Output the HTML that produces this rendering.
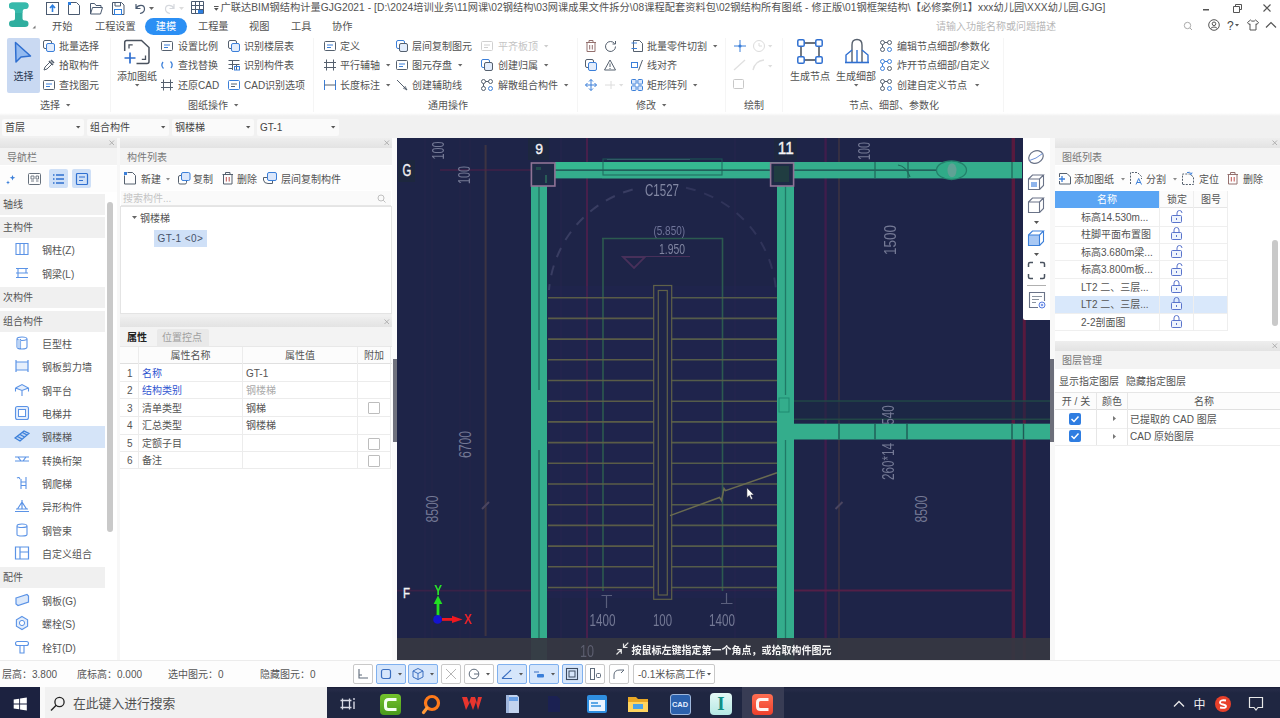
<!DOCTYPE html>
<html lang="zh-CN"><head><meta charset="utf-8"><title>广联达BIM钢结构计量GJG2021</title>
<style>
html,body{margin:0;padding:0;}
body{width:1280px;height:718px;overflow:hidden;background:#fff;position:relative;
font-family:"Liberation Sans","Noto Sans CJK SC",sans-serif;font-size:10px;color:#3a3a3a;}
#root{position:absolute;left:0;top:0;width:1280px;height:718px;overflow:hidden;background:#f0f0f0;filter:blur(0.55px);}
#root div,#root span,#root svg{position:absolute;box-sizing:border-box;}
.t{white-space:nowrap;display:block;}
.title{letter-spacing:0.068px;}
svg{overflow:visible;}
svg text{font-family:"Liberation Sans","Noto Sans CJK SC",sans-serif;}
</style></head>
<body><div id="root">
<div style="left:0px;top:0px;width:1280px;height:115px;background:#ffffff;"></div>
<div style="left:0px;top:113px;width:1280px;height:3px;background:linear-gradient(#ffffff,#f1f1f1);"></div>
<svg style="left:0px;top:0px;" width="34" height="30" viewBox="0 0 34 30"><path d="M12.5 2.5 H25 Q28.5 2.5 28.5 5.7 Q28.5 9 25 9 H24.5 Q22.5 9 22.5 11 V18.5 Q22.5 20.5 24.5 20.5 H25 Q28.5 20.5 28.5 23.8 Q28.5 27 25 27 H12.5 Q9 27 9 23.8 Q9 20.5 12.5 20.5 H13 Q15 20.5 15 18.5 V11 Q15 9 13 9 H12.5 Q9 9 9 5.7 Q9 2.5 12.5 2.5 Z" fill="#2fae9f"/>
<path d="M12.5 2.5 H25 Q28.5 2.5 28.5 5.7 Q28.5 9 25 9 H24.5 Q22.5 9 22.5 11 V13 H15 V11 Q15 9 13 9 H12.5 Q9 9 9 5.7 Q9 2.5 12.5 2.5 Z" fill="#3abdaf" opacity="0.8"/>
<path d="M32.5 28.5 h3 v-3 z" fill="#777"/></svg>
<svg style="left:46px;top:1.5px;" width="14" height="13" viewBox="0 0 14 13"><rect x="0.5" y="0.5" width="12" height="12" fill="none" stroke="#4a5a70"/><path d="M6.5 10 V3.5 M4 6 L6.5 3.2 L9 6" stroke="#2d7fe0" stroke-width="1.6" fill="none"/></svg>
<svg style="left:68px;top:1.5px;" width="14" height="13" viewBox="0 0 14 13"><path d="M0.5 3 V12.5 H11.5 V3.5 L8.5 0.5 H3" fill="none" stroke="#4a5a70"/><rect x="0" y="0" width="3" height="3" fill="#2d7fe0"/></svg>
<svg style="left:90px;top:1.5px;" width="14" height="13" viewBox="0 0 14 13"><path d="M0.5 12 V1.5 H4.5 L6 3.5 H11 V5.5 M0.5 12 L2.5 5.5 H12.5 L10.5 12 Z" fill="none" stroke="#4a5a70"/></svg>
<svg style="left:112px;top:1.5px;" width="14" height="13" viewBox="0 0 14 13"><path d="M0.5 0.5 H9.5 L12 3 V12.5 H0.5 Z" fill="none" stroke="#4a5a70"/><rect x="2.5" y="7.5" width="7" height="5" fill="none" stroke="#2d7fe0"/><path d="M3 0.5 V4 H8.5 V0.5" fill="none" stroke="#4a5a70"/></svg>
<svg style="left:134px;top:1.5px;" width="14" height="13" viewBox="0 0 14 13"><path d="M2 2 V6.5 H6.5 M2.3 6.3 C4 2.5 10.5 2 10.5 7 C10.5 9.5 8.5 11 6 11.5" fill="none" stroke="#4a5a70" stroke-width="1.2"/></svg>
<svg style="left:149px;top:7px;" width="6" height="4" viewBox="0 0 6 4"><path d="M0 0 H5 L2.5 3 Z" fill="#666"/></svg>
<svg style="left:163px;top:1.5px;" width="14" height="13" viewBox="0 0 14 13"><path d="M11 2 V6.5 H6.5 M10.7 6.3 C9 2.5 2.5 2 2.5 7 C2.5 9.5 4.5 11 7 11.5" fill="none" stroke="#d5d8dd" stroke-width="1.2"/></svg>
<svg style="left:179px;top:7px;" width="6" height="4" viewBox="0 0 6 4"><path d="M0 0 H5 L2.5 3 Z" fill="#ddd"/></svg>
<svg style="left:191px;top:1px;" width="14" height="13" viewBox="0 0 14 13"><path d="M0.5 0.5 H12.5 V12.5 H0.5 Z M0.5 4.5 H12.5 M0.5 8.5 H12.5 M4.5 0.5 V12.5 M8.5 0.5 V8.5" fill="none" stroke="#4a5a70"/><rect x="7" y="9" width="5" height="3.5" fill="#2d7fe0"/></svg>
<svg style="left:214px;top:6px;" width="6" height="6" viewBox="0 0 6 6"><path d="M0 2 H4.6 L2.3 4.8 Z M0 0 H4.6 V0.9 H0 Z" fill="#555"/></svg>
<span class="t title" style="left:220.4px;top:0.4px;height:16px;line-height:16px;font-size:10.2px;color:#525252;">广联达BIM钢结构计量GJG2021 - [D:\2024培训业务\11网课\02钢结构\03网课成果文件拆分\08课程配套资料包\02钢结构所有图纸 - 修正版\01钢框架结构\【必修案例1】xxx幼儿园\XXX幼儿园.GJG]</span>
<svg style="left:1203px;top:9px;" width="8" height="2" viewBox="0 0 8 2"><rect width="6" height="1.5" fill="#555"/></svg>
<svg style="left:1232.5px;top:3.5px;" width="10" height="9" viewBox="0 0 10 9"><path d="M2.5 2.5 V0.5 H8.5 V5.5 H6.5 M0.5 2.5 H6.5 V8.5 H0.5 Z" fill="none" stroke="#555"/></svg>
<svg style="left:1263px;top:4px;" width="9" height="9" viewBox="0 0 9 9"><path d="M0.5 0.5 L7.5 7.5 M7.5 0.5 L0.5 7.5" stroke="#555" stroke-width="1.1"/></svg>
<span class="t" style="left:52px;top:19.8px;height:14px;line-height:14px;font-size:10.2px;color:#525252;">开始</span>
<span class="t" style="left:95px;top:19.8px;height:14px;line-height:14px;font-size:10.2px;color:#525252;">工程设置</span>
<span class="t" style="left:198px;top:19.8px;height:14px;line-height:14px;font-size:10.2px;color:#525252;">工程量</span>
<span class="t" style="left:249px;top:19.8px;height:14px;line-height:14px;font-size:10.2px;color:#525252;">视图</span>
<span class="t" style="left:291px;top:19.8px;height:14px;line-height:14px;font-size:10.2px;color:#525252;">工具</span>
<span class="t" style="left:332px;top:19.8px;height:14px;line-height:14px;font-size:10.2px;color:#525252;">协作</span>
<div style="left:145px;top:18px;width:42px;height:16.5px;background:#2b8ff4;border-radius:8.5px;"></div>
<span class="t" style="left:145px;top:19.8px;height:14px;line-height:14px;font-size:10.2px;color:#ffffff;width:42px;text-align:center;">建模</span>
<span class="t" style="left:936px;top:19.8px;height:14px;line-height:14px;font-size:10px;color:#b8b8b8;">请输入功能名称或问题描述</span>
<svg style="left:1183px;top:21px;" width="10" height="10" viewBox="0 0 10 10"><circle cx="4.5" cy="4.5" r="3.2" fill="none" stroke="#aaa"/><path d="M7 7 L9 9" stroke="#aaa"/></svg>
<svg style="left:1208px;top:19px;" width="12" height="12" viewBox="0 0 12 12"><circle cx="6" cy="6" r="5.3" fill="none" stroke="#555"/><circle cx="6" cy="4.8" r="1.8" fill="none" stroke="#555"/><path d="M2.6 9.8 C3.5 7.5 8.5 7.5 9.4 9.8" fill="none" stroke="#555"/></svg>
<span class="t" style="left:1227px;top:18.8px;height:14px;line-height:14px;font-size:12px;color:#444;">?</span>
<svg style="left:1235px;top:24px;" width="5" height="3" viewBox="0 0 5 3"><path d="M0 0 H4 L2 2.4 Z" fill="#555"/></svg>
<svg style="left:1247px;top:19px;" width="12" height="12" viewBox="0 0 12 12"><path d="M3.5 1 L0.5 3.5 L2 5.5 L3 4.8 V11 H9 V4.8 L10 5.5 L11.5 3.5 L8.5 1 C8 2.6 4 2.6 3.5 1 Z" fill="none" stroke="#555"/></svg>
<svg style="left:1265px;top:20.5px;" width="12" height="8" viewBox="0 0 12 8"><path d="M1 6.5 L6 1.5 L11 6.5" fill="none" stroke="#555" stroke-width="1.2"/></svg>
<div style="left:7px;top:38px;width:33px;height:55px;background:#c9d9f2;border-radius:2px;"></div>
<svg style="left:0px;top:0px;" width="40" height="70" viewBox="0 0 40 70"><path d="M15.5 42.5 L30.5 56 L21 57 L16 62 Z" fill="#93baf0" stroke="#2f6fd0" stroke-width="1.5" stroke-linejoin="round"/></svg>
<span class="t" style="left:7px;top:69.5px;height:14px;line-height:14px;font-size:10px;color:#2a3a55;width:33px;text-align:center;">选择</span>
<svg style="left:43px;top:40px;" width="13" height="12" viewBox="0 0 13 12"><rect x="0.5" y="0.5" width="8" height="8" rx="1.5" fill="none" stroke="#55606e"/><rect x="3.5" y="3.5" width="8" height="8" rx="1.5" fill="#e3edfc" stroke="#3b7fd9"/></svg>
<span class="t" style="left:59px;top:39.8px;height:14px;line-height:14px;font-size:10px;color:#525252;">批量选择</span>
<svg style="left:43px;top:59px;" width="13" height="12" viewBox="0 0 13 12"><path d="M1 11 L2 8 L7 3 L9 5 L4 10 Z" fill="none" stroke="#55606e"/><path d="M6 2 L10 6 M8 1 L11 4" stroke="#55606e" stroke-width="1.6"/></svg>
<span class="t" style="left:59px;top:58.8px;height:14px;line-height:14px;font-size:10px;color:#525252;">拾取构件</span>
<svg style="left:43px;top:79px;" width="13" height="12" viewBox="0 0 13 12"><rect x="0.5" y="1.5" width="11" height="9" rx="1" fill="none" stroke="#55606e"/><path d="M3 5 H9 M3 7.5 H7" stroke="#3b7fd9"/></svg>
<span class="t" style="left:59px;top:78.8px;height:14px;line-height:14px;font-size:10px;color:#525252;">查找图元</span>
<span class="t" style="left:40px;top:99px;height:14px;line-height:14px;font-size:10px;color:#555;">选择</span>
<svg style="left:66px;top:104.2px;" width="5" height="3" viewBox="0 0 5 3"><path d="M0 0 H4.4 L2.2 2.6 Z" fill="#666"/></svg>
<div style="left:110px;top:38px;width:1px;height:74px;background:#f5f5f5;"></div>
<div style="left:313px;top:38px;width:1px;height:74px;background:#f5f5f5;"></div>
<div style="left:577px;top:38px;width:1px;height:74px;background:#f5f5f5;"></div>
<div style="left:725px;top:38px;width:1px;height:74px;background:#f5f5f5;"></div>
<div style="left:782px;top:38px;width:1px;height:74px;background:#f5f5f5;"></div>
<div style="left:1003px;top:38px;width:1px;height:74px;background:#f5f5f5;"></div>
<svg style="left:124px;top:39px;" width="27" height="27" viewBox="0 0 27 27"><path d="M0.7 12 V3.5 Q0.7 1.5 2.7 1.5 H17.5 L25 8.5 V22.5 Q25 24.5 23 24.5 H12.5" fill="none" stroke="#4a525e" stroke-width="1.5"/><path d="M5 9.5 V5.8 H8.7 M21.5 16.5 V20.3 H17.8" fill="none" stroke="#4a525e" stroke-width="1.3"/><path d="M0.5 19 H11.5 M6 13.5 V24.5" stroke="#2f6fd0" stroke-width="1.7"/></svg>
<span class="t" style="left:117px;top:69.5px;height:14px;line-height:14px;font-size:10px;color:#525252;">添加图纸</span>
<svg style="left:135px;top:84px;" width="5" height="3" viewBox="0 0 5 3"><path d="M0 0 H4.4 L2.2 2.6 Z" fill="#666"/></svg>
<svg style="left:161px;top:40px;" width="13" height="12" viewBox="0 0 13 12"><rect x="0.5" y="1.5" width="11" height="9" rx="1" fill="none" stroke="#55606e"/><path d="M3 5 H9 M3 7.5 H7" stroke="#3b7fd9"/></svg>
<span class="t" style="left:178px;top:39.8px;height:14px;line-height:14px;font-size:10px;color:#525252;">设置比例</span>
<svg style="left:161px;top:59px;" width="13" height="12" viewBox="0 0 13 12"><path d="M2 3 A5 5 0 0 0 2.5 9.5 M10 9 A5 5 0 0 0 9.5 2.5" fill="none" stroke="#3b7fd9" stroke-width="1.3"/></svg>
<span class="t" style="left:178px;top:58.8px;height:14px;line-height:14px;font-size:10px;color:#525252;">查找替换</span>
<svg style="left:161px;top:79px;" width="13" height="12" viewBox="0 0 13 12"><path d="M2.5 0.5 V11.5 M9.5 0.5 V11.5 M0 3.5 H12 M0 8.5 H12" stroke="#55606e" fill="none"/></svg>
<span class="t" style="left:178px;top:78.8px;height:14px;line-height:14px;font-size:10px;color:#525252;">还原CAD</span>
<svg style="left:228px;top:40px;" width="13" height="12" viewBox="0 0 13 12"><rect x="0.5" y="0.5" width="8" height="8" rx="1.5" fill="none" stroke="#55606e"/><rect x="3.5" y="3.5" width="8" height="8" rx="1.5" fill="#e3edfc" stroke="#3b7fd9"/></svg>
<span class="t" style="left:244px;top:39.8px;height:14px;line-height:14px;font-size:10px;color:#525252;">识别楼层表</span>
<svg style="left:228px;top:59px;" width="13" height="12" viewBox="0 0 13 12"><path d="M0.5 1.5 H11.5 M0.5 5.5 H11.5 M4.5 1 V11 M8.5 5 V11 M0.5 9.5 H4.5" fill="none" stroke="#55606e"/><rect x="6.5" y="7.5" width="5" height="3.5" fill="none" stroke="#3b7fd9"/></svg>
<span class="t" style="left:244px;top:58.8px;height:14px;line-height:14px;font-size:10px;color:#525252;">识别构件表</span>
<svg style="left:228px;top:79px;" width="13" height="12" viewBox="0 0 13 12"><rect x="0.5" y="1.5" width="11" height="9" rx="1" fill="none" stroke="#3b7fd9"/><path d="M3 5 H9 M3 7.5 H7" stroke="#55606e"/></svg>
<span class="t" style="left:244px;top:78.8px;height:14px;line-height:14px;font-size:10px;color:#525252;">CAD识别选项</span>
<span class="t" style="left:188px;top:99px;height:14px;line-height:14px;font-size:10px;color:#555;">图纸操作</span>
<svg style="left:234px;top:104.2px;" width="5" height="3" viewBox="0 0 5 3"><path d="M0 0 H4.4 L2.2 2.6 Z" fill="#666"/></svg>
<svg style="left:324px;top:40px;" width="13" height="12" viewBox="0 0 13 12"><rect x="0.5" y="1.5" width="11" height="9" rx="1" fill="none" stroke="#55606e"/><path d="M3 5 H9 M3 7.5 H7" stroke="#3b7fd9"/></svg>
<span class="t" style="left:340px;top:39.8px;height:14px;line-height:14px;font-size:10px;color:#525252;">定义</span>
<svg style="left:324px;top:59px;" width="13" height="12" viewBox="0 0 13 12"><path d="M2.5 0.5 V11.5 M9.5 0.5 V11.5 M0 3.5 H12 M0 8.5 H12" stroke="#55606e" fill="none"/></svg>
<span class="t" style="left:340px;top:58.8px;height:14px;line-height:14px;font-size:10px;color:#525252;">平行辅轴</span>
<svg style="left:386px;top:64px;" width="5" height="3" viewBox="0 0 5 3"><path d="M0 0 H4.4 L2.2 2.6 Z" fill="#666"/></svg>
<svg style="left:324px;top:79px;" width="13" height="12" viewBox="0 0 13 12"><path d="M0.5 1 V11 M11.5 1 V11" stroke="#3b7fd9"/><path d="M0.5 6 H11.5" stroke="#55606e"/></svg>
<span class="t" style="left:340px;top:78.8px;height:14px;line-height:14px;font-size:10px;color:#525252;">长度标注</span>
<svg style="left:386px;top:84px;" width="5" height="3" viewBox="0 0 5 3"><path d="M0 0 H4.4 L2.2 2.6 Z" fill="#666"/></svg>
<svg style="left:396px;top:40px;" width="13" height="12" viewBox="0 0 13 12"><rect x="0.5" y="0.5" width="8" height="8" rx="1.5" fill="none" stroke="#3b7fd9"/><rect x="3.5" y="3.5" width="8" height="8" rx="1.5" fill="#e3edfc" stroke="#55606e"/></svg>
<span class="t" style="left:412px;top:39.8px;height:14px;line-height:14px;font-size:10px;color:#525252;">层间复制图元</span>
<svg style="left:396px;top:59px;" width="13" height="12" viewBox="0 0 13 12"><rect x="0.5" y="1.5" width="11" height="9" rx="1" fill="none" stroke="#55606e"/><path d="M3 5 H9 M3 7.5 H7" stroke="#3b7fd9"/></svg>
<span class="t" style="left:412px;top:58.8px;height:14px;line-height:14px;font-size:10px;color:#525252;">图元存盘</span>
<svg style="left:458px;top:64px;" width="5" height="3" viewBox="0 0 5 3"><path d="M0 0 H4.4 L2.2 2.6 Z" fill="#666"/></svg>
<svg style="left:396px;top:79px;" width="13" height="12" viewBox="0 0 13 12"><path d="M1 1 L11 11" stroke="#55606e"/><path d="M7 9 L11 11 L9 7" stroke="#55606e" fill="none" stroke-width="0.8"/></svg>
<span class="t" style="left:412px;top:78.8px;height:14px;line-height:14px;font-size:10px;color:#525252;">创建辅助线</span>
<svg style="left:481px;top:40px;" width="13" height="12" viewBox="0 0 13 12"><rect x="0.5" y="1.5" width="11" height="9" rx="1" fill="none" stroke="#d0d0d0"/><path d="M3 5 H9 M3 7.5 H7" stroke="#d0d0d0"/></svg>
<span class="t" style="left:498px;top:39.8px;height:14px;line-height:14px;font-size:10px;color:#c4c4c4;">平齐板顶</span>
<svg style="left:544px;top:45px;" width="5" height="3" viewBox="0 0 5 3"><path d="M0 0 H4.4 L2.2 2.6 Z" fill="#ccc"/></svg>
<svg style="left:481px;top:59px;" width="13" height="12" viewBox="0 0 13 12"><rect x="0.5" y="0.5" width="8" height="8" rx="1.5" fill="none" stroke="#3b7fd9"/><rect x="3.5" y="3.5" width="8" height="8" rx="1.5" fill="#e3edfc" stroke="#55606e"/></svg>
<span class="t" style="left:498px;top:58.8px;height:14px;line-height:14px;font-size:10px;color:#525252;">创建归属</span>
<svg style="left:544px;top:64px;" width="5" height="3" viewBox="0 0 5 3"><path d="M0 0 H4.4 L2.2 2.6 Z" fill="#666"/></svg>
<svg style="left:481px;top:79px;" width="13" height="12" viewBox="0 0 13 12"><circle cx="2.5" cy="2.5" r="2" fill="none" stroke="#55606e"/><circle cx="9.5" cy="2.5" r="2" fill="none" stroke="#55606e"/><circle cx="2.5" cy="9.5" r="2" fill="none" stroke="#55606e"/><circle cx="9.5" cy="9.5" r="2" fill="none" stroke="#3b7fd9"/><path d="M4.5 2.5 H7.5 M2.5 4.5 V7.5" stroke="#55606e"/></svg>
<span class="t" style="left:498px;top:78.8px;height:14px;line-height:14px;font-size:10px;color:#525252;">解散组合构件</span>
<svg style="left:564px;top:84px;" width="5" height="3" viewBox="0 0 5 3"><path d="M0 0 H4.4 L2.2 2.6 Z" fill="#666"/></svg>
<span class="t" style="left:428px;top:99px;height:14px;line-height:14px;font-size:10px;color:#555;">通用操作</span>
<svg style="left:585px;top:40px;" width="13" height="12" viewBox="0 0 13 12"><path d="M1 2.5 H11 M4 2.5 V0.5 H8 V2.5 M2 2.5 V11.5 H10 V2.5 M4.7 5 V9.5 M7.3 5 V9.5" fill="none" stroke="#94706e"/></svg>
<svg style="left:604px;top:40px;" width="13" height="12" viewBox="0 0 13 12"><path d="M10.5 3.5 A5 5 0 1 0 11.5 6.5" fill="none" stroke="#55606e"/><path d="M11.5 1 V4 H8.5" fill="none" stroke="#55606e"/></svg>
<svg style="left:585px;top:59px;" width="13" height="12" viewBox="0 0 13 12"><rect x="0.5" y="0.5" width="8" height="8" rx="1.5" fill="none" stroke="#55606e"/><rect x="3.5" y="3.5" width="8" height="8" rx="1.5" fill="#e3edfc" stroke="#3b7fd9"/></svg>
<svg style="left:604px;top:59px;" width="13" height="12" viewBox="0 0 13 12"><path d="M6 1 L11.5 11 H0.5 Z" fill="none" stroke="#55606e"/><path d="M6 4.5 V8 M6 9 V10" stroke="#55606e"/></svg>
<svg style="left:585px;top:79px;" width="13" height="12" viewBox="0 0 13 12"><path d="M6 0.5 V11.5 M0.5 6 H11.5 M4 2.5 L6 0.5 L8 2.5 M4 9.5 L6 11.5 L8 9.5 M2.5 4 L0.5 6 L2.5 8 M9.5 4 L11.5 6 L9.5 8" fill="none" stroke="#3b7fd9"/></svg>
<svg style="left:604px;top:79px;" width="13" height="12" viewBox="0 0 13 12"><path d="M1 6 H11 M7 2 V10" stroke="#dcdcdc"/></svg>
<svg style="left:619px;top:84px;" width="5" height="3" viewBox="0 0 5 3"><path d="M0 0 H4.4 L2.2 2.6 Z" fill="#ddd"/></svg>
<svg style="left:631px;top:40px;" width="13" height="12" viewBox="0 0 13 12"><path d="M2.5 0.5 H8.5 L11.5 3.5 V11.5 H2.5 Z" fill="none" stroke="#55606e"/><path d="M0.5 3 H6 M0.5 8.5 H6" stroke="#3b7fd9"/></svg>
<span class="t" style="left:647px;top:39.8px;height:14px;line-height:14px;font-size:10px;color:#525252;">批量零件切割</span>
<svg style="left:713px;top:45px;" width="5" height="3" viewBox="0 0 5 3"><path d="M0 0 H4.4 L2.2 2.6 Z" fill="#666"/></svg>
<svg style="left:631px;top:59px;" width="13" height="12" viewBox="0 0 13 12"><rect x="0.5" y="3.5" width="6" height="5" fill="none" stroke="#3b7fd9"/><path d="M7.5 11.5 L11.5 1" stroke="#55606e"/></svg>
<span class="t" style="left:647px;top:58.8px;height:14px;line-height:14px;font-size:10px;color:#525252;">线对齐</span>
<svg style="left:631px;top:79px;" width="13" height="12" viewBox="0 0 13 12"><rect x="0.5" y="0.5" width="4.6" height="4.6" rx="0.8" fill="#dbe7fb" stroke="#3b7fd9"/><rect x="6.9" y="0.5" width="4.6" height="4.6" rx="0.8" fill="#dbe7fb" stroke="#3b7fd9"/><rect x="0.5" y="6.9" width="4.6" height="4.6" rx="0.8" fill="#dbe7fb" stroke="#3b7fd9"/><rect x="6.9" y="6.9" width="4.6" height="4.6" rx="0.8" fill="#dbe7fb" stroke="#3b7fd9"/></svg>
<span class="t" style="left:647px;top:78.8px;height:14px;line-height:14px;font-size:10px;color:#525252;">矩形阵列</span>
<svg style="left:693px;top:84px;" width="5" height="3" viewBox="0 0 5 3"><path d="M0 0 H4.4 L2.2 2.6 Z" fill="#666"/></svg>
<span class="t" style="left:636px;top:99px;height:14px;line-height:14px;font-size:10px;color:#555;">修改</span>
<svg style="left:662px;top:104.2px;" width="5" height="3" viewBox="0 0 5 3"><path d="M0 0 H4.4 L2.2 2.6 Z" fill="#666"/></svg>
<svg style="left:733px;top:39px;" width="14" height="14" viewBox="0 0 14 14"><path d="M7 1 V13 M1 7 H13" stroke="#3b7fd9"/><circle cx="7" cy="7" r="1.6" fill="#3b7fd9"/></svg>
<svg style="left:752px;top:39px;" width="14" height="14" viewBox="0 0 14 14"><circle cx="7" cy="7" r="5.5" fill="none" stroke="#dcdcdc"/><path d="M7 4 V7 H10" stroke="#dcdcdc" fill="none"/></svg>
<svg style="left:768px;top:45px;" width="5" height="3" viewBox="0 0 5 3"><path d="M0 0 H4.4 L2.2 2.6 Z" fill="#ddd"/></svg>
<svg style="left:733px;top:58px;" width="14" height="14" viewBox="0 0 14 14"><path d="M1 12 L12 2" stroke="#e0e0e0" stroke-width="1.3"/></svg>
<svg style="left:752px;top:58px;" width="14" height="14" viewBox="0 0 14 14"><path d="M1 12 Q3 3 12 2" stroke="#e0e0e0" stroke-width="1.3" fill="none"/></svg>
<svg style="left:768px;top:65px;" width="5" height="3" viewBox="0 0 5 3"><path d="M0 0 H4.4 L2.2 2.6 Z" fill="#ddd"/></svg>
<svg style="left:733px;top:79px;" width="12" height="11" viewBox="0 0 12 11"><rect x="0.5" y="0.5" width="10" height="9" rx="1" fill="none" stroke="#c8c8c8"/></svg>
<span class="t" style="left:744px;top:99px;height:14px;line-height:14px;font-size:10px;color:#555;">绘制</span>
<svg style="left:796px;top:38px;" width="28" height="27" viewBox="0 0 28 27"><path d="M5 5 H23 V22 H5 Z" fill="none" stroke="#3a4350" stroke-width="1.4"/><rect x="1.7999999999999998" y="1.7999999999999998" width="6.4" height="6.4" rx="1.3" fill="#fff" stroke="#2f6fd0" stroke-width="1.5"/><rect x="19.8" y="1.7999999999999998" width="6.4" height="6.4" rx="1.3" fill="#fff" stroke="#2f6fd0" stroke-width="1.5"/><rect x="1.7999999999999998" y="18.8" width="6.4" height="6.4" rx="1.3" fill="#fff" stroke="#2f6fd0" stroke-width="1.5"/><rect x="19.8" y="18.8" width="6.4" height="6.4" rx="1.3" fill="#fff" stroke="#2f6fd0" stroke-width="1.5"/></svg>
<span class="t" style="left:790px;top:69.5px;height:14px;line-height:14px;font-size:10px;color:#525252;">生成节点</span>
<svg style="left:844px;top:38px;" width="26" height="27" viewBox="0 0 26 27"><path d="M8 24 V7 Q8 1.5 13 1.5 Q18 1.5 18 7 V24" fill="none" stroke="#555f6c" stroke-width="1.4"/><path d="M2 24 V17 L8 12 M24 24 V17 L18 12 M13 12 V24" fill="none" stroke="#2f6fd0" stroke-width="1.4"/><path d="M1 24.5 H25" stroke="#2f6fd0" stroke-width="1.6"/></svg>
<span class="t" style="left:836px;top:69.5px;height:14px;line-height:14px;font-size:10px;color:#525252;">生成细部</span>
<svg style="left:854px;top:84px;" width="5" height="3" viewBox="0 0 5 3"><path d="M0 0 H4.4 L2.2 2.6 Z" fill="#666"/></svg>
<svg style="left:880px;top:40px;" width="13" height="12" viewBox="0 0 13 12"><circle cx="2.5" cy="2.5" r="2" fill="none" stroke="#55606e"/><circle cx="9.5" cy="2.5" r="2" fill="none" stroke="#55606e"/><circle cx="2.5" cy="9.5" r="2" fill="none" stroke="#55606e"/><circle cx="9.5" cy="9.5" r="2" fill="none" stroke="#3b7fd9"/><path d="M4.5 2.5 H7.5 M2.5 4.5 V7.5" stroke="#55606e"/></svg>
<span class="t" style="left:897px;top:39.8px;height:14px;line-height:14px;font-size:10px;color:#525252;">编辑节点细部/参数化</span>
<svg style="left:880px;top:59px;" width="13" height="12" viewBox="0 0 13 12"><circle cx="2.5" cy="2.5" r="2" fill="none" stroke="#3b7fd9"/><circle cx="9.5" cy="2.5" r="2" fill="none" stroke="#3b7fd9"/><circle cx="2.5" cy="9.5" r="2" fill="none" stroke="#3b7fd9"/><circle cx="9.5" cy="9.5" r="2" fill="none" stroke="#55606e"/><path d="M4.5 2.5 H7.5 M2.5 4.5 V7.5" stroke="#3b7fd9"/></svg>
<span class="t" style="left:897px;top:58.8px;height:14px;line-height:14px;font-size:10px;color:#525252;">炸开节点细部/自定义</span>
<svg style="left:880px;top:79px;" width="13" height="12" viewBox="0 0 13 12"><circle cx="2.5" cy="2.5" r="2" fill="none" stroke="#55606e"/><circle cx="9.5" cy="2.5" r="2" fill="none" stroke="#55606e"/><circle cx="2.5" cy="9.5" r="2" fill="none" stroke="#55606e"/><circle cx="9.5" cy="9.5" r="2" fill="none" stroke="#3b7fd9"/><path d="M4.5 2.5 H7.5 M2.5 4.5 V7.5" stroke="#55606e"/></svg>
<span class="t" style="left:897px;top:78.8px;height:14px;line-height:14px;font-size:10px;color:#525252;">创建自定义节点</span>
<svg style="left:975px;top:84px;" width="5" height="3" viewBox="0 0 5 3"><path d="M0 0 H4.4 L2.2 2.6 Z" fill="#666"/></svg>
<span class="t" style="left:849px;top:99px;height:14px;line-height:14px;font-size:10px;color:#555;">节点、细部、参数化</span>
<div style="left:0px;top:116px;width:1280px;height:22px;background:#f1f1f1;"></div>
<div style="left:2px;top:119px;width:82px;height:17px;background:#fafafa;border-radius:2px;"></div>
<span class="t" style="left:5px;top:121.3px;height:14px;line-height:14px;font-size:10px;color:#444;">首层</span>
<svg style="left:76px;top:126px;" width="5" height="3" viewBox="0 0 5 3"><path d="M0 0 H4.4 L2.2 2.6 Z" fill="#555"/></svg>
<div style="left:87px;top:119px;width:82px;height:17px;background:#fafafa;border-radius:2px;"></div>
<span class="t" style="left:90px;top:121.3px;height:14px;line-height:14px;font-size:10px;color:#444;">组合构件</span>
<svg style="left:161px;top:126px;" width="5" height="3" viewBox="0 0 5 3"><path d="M0 0 H4.4 L2.2 2.6 Z" fill="#555"/></svg>
<div style="left:172px;top:119px;width:82px;height:17px;background:#fafafa;border-radius:2px;"></div>
<span class="t" style="left:175px;top:121.3px;height:14px;line-height:14px;font-size:10px;color:#444;">钢楼梯</span>
<svg style="left:246px;top:126px;" width="5" height="3" viewBox="0 0 5 3"><path d="M0 0 H4.4 L2.2 2.6 Z" fill="#555"/></svg>
<div style="left:257px;top:119px;width:82px;height:17px;background:#fafafa;border-radius:2px;"></div>
<span class="t" style="left:260px;top:121.3px;height:14px;line-height:14px;font-size:10px;color:#444;">GT-1</span>
<svg style="left:331px;top:126px;" width="5" height="3" viewBox="0 0 5 3"><path d="M0 0 H4.4 L2.2 2.6 Z" fill="#555"/></svg>
<div style="left:0px;top:138px;width:117px;height:522px;background:#ffffff;"></div>
<div style="left:0px;top:138px;width:117px;height:10px;background:linear-gradient(#eeeeee,#e3e3e3);"></div>
<svg style="left:109px;top:140px;" width="6" height="6" viewBox="0 0 6 6"><path d="M0.5 0.5 L5 5 M5 0.5 L0.5 5" stroke="#aaa" stroke-width="0.9"/></svg>
<div style="left:0px;top:148px;width:117px;height:17px;background:#f3f3f3;"></div>
<span class="t" style="left:7px;top:150.8px;height:14px;line-height:14px;font-size:10px;color:#777;">导航栏</span>
<div style="left:0px;top:166px;width:117px;height:26px;background:#fdfdfd;"></div>
<svg style="left:5px;top:174px;" width="12" height="12" viewBox="0 0 12 12"><path d="M7.5 1 L8.3 3 L10.3 3.8 L8.3 4.6 L7.5 6.6 L6.7 4.6 L4.7 3.8 L6.7 3 Z M3 6.5 L3.6 8 L5 8.5 L3.6 9 L3 10.5 L2.4 9 L1 8.5 L2.4 8 Z" fill="#3b7fd9"/></svg>
<svg style="left:27px;top:171px;" width="16" height="16" viewBox="0 0 16 16"><rect x="1.5" y="2.5" width="12" height="11" rx="1" fill="none" stroke="#66707c"/><path d="M4 5 H7 V8 H4 Z M9 5 H11.5 V8 H9 Z M4 10 H7 M9 10 H11.5" fill="none" stroke="#66707c" stroke-width="0.9"/></svg>
<div style="left:49px;top:169px;width:19px;height:19px;background:#cfe0f7;border-radius:2px;"></div>
<svg style="left:51px;top:171px;" width="16" height="16" viewBox="0 0 16 16"><path d="M5 4 H13 M5 8 H13 M5 12 H13" stroke="#2f6fd0" stroke-width="1.4"/><path d="M2 4 H3.5 M2 8 H3.5 M2 12 H3.5" stroke="#2f6fd0" stroke-width="1.6"/></svg>
<div style="left:72px;top:169px;width:19px;height:19px;background:#cfe0f7;border-radius:2px;"></div>
<svg style="left:74px;top:171px;" width="16" height="16" viewBox="0 0 16 16"><rect x="2.5" y="2.5" width="11" height="11" rx="1" fill="none" stroke="#2f6fd0" stroke-width="1.2"/><path d="M5 6 H11 M5 9.5 H9" stroke="#2f6fd0"/></svg>
<div style="left:0px;top:194px;width:105px;height:21px;background:#f0f0f0;"></div>
<span class="t" style="left:3px;top:198.3px;height:14px;line-height:14px;font-size:10px;color:#545454;">轴线</span>
<div style="left:0px;top:217px;width:105px;height:21px;background:#f0f0f0;"></div>
<span class="t" style="left:3px;top:221.3px;height:14px;line-height:14px;font-size:10px;color:#545454;">主构件</span>
<svg style="left:14px;top:241.4px;" width="16" height="16" viewBox="0 0 16 16"><path d="M2 2.5 H14 V13.5 H2 Z M6 2.5 V13.5 M10 2.5 V13.5" fill="none" stroke="#5b93e6" stroke-width="1.1"/></svg>
<span class="t" style="left:42px;top:244.3px;height:14px;line-height:14px;font-size:10px;color:#545454;">钢柱(Z)</span>
<svg style="left:14px;top:265.4px;" width="16" height="16" viewBox="0 0 16 16"><path d="M2 3.5 H14 M2 12.5 H14 M2 8 H14 M4 3.5 V12.5 M12 3.5 V8" fill="none" stroke="#5b93e6" stroke-width="1.1"/></svg>
<span class="t" style="left:42px;top:268.3px;height:14px;line-height:14px;font-size:10px;color:#545454;">钢梁(L)</span>
<div style="left:0px;top:287px;width:105px;height:21px;background:#f0f0f0;"></div>
<span class="t" style="left:3px;top:291.3px;height:14px;line-height:14px;font-size:10px;color:#545454;">次构件</span>
<div style="left:0px;top:311px;width:105px;height:21px;background:#f0f0f0;"></div>
<span class="t" style="left:3px;top:315.3px;height:14px;line-height:14px;font-size:10px;color:#545454;">组合构件</span>
<svg style="left:14px;top:335.4px;" width="16" height="16" viewBox="0 0 16 16"><path d="M3 4 V12 Q3 14 8 14 Q13 14 13 12 V4 Q13 2 8 2 Q3 2 3 4 Z M6.5 4 V13.5 M3 4.5 Q8 6.5 13 4.5" fill="none" stroke="#5b93e6" stroke-width="1.1"/><rect x="3.5" y="5" width="3" height="8" fill="#bcd4f5"/></svg>
<span class="t" style="left:42px;top:338.3px;height:14px;line-height:14px;font-size:10px;color:#545454;">巨型柱</span>
<svg style="left:14px;top:358.4px;" width="16" height="16" viewBox="0 0 16 16"><rect x="2" y="4" width="12" height="8" fill="#e6effc"/><path d="M2 2 V14 M14 2 V14 M2 4 H14 M2 12 H14" fill="none" stroke="#5b93e6" stroke-width="1.2"/></svg>
<span class="t" style="left:42px;top:361.3px;height:14px;line-height:14px;font-size:10px;color:#545454;">钢板剪力墙</span>
<svg style="left:14px;top:382.4px;" width="16" height="16" viewBox="0 0 16 16"><path d="M1.5 6 L8 2.5 L14.5 6 L8 8.5 Z" fill="#e6effc"/><path d="M1.5 6 L8 2.5 L14.5 6 V9.5 M1.5 6 V9.5 M8 8.5 V14 M1.5 6 L8 8.5 L14.5 6" fill="none" stroke="#5b93e6" stroke-width="1.1"/></svg>
<span class="t" style="left:42px;top:385.3px;height:14px;line-height:14px;font-size:10px;color:#545454;">钢平台</span>
<svg style="left:14px;top:405.4px;" width="16" height="16" viewBox="0 0 16 16"><rect x="1.5" y="1.5" width="13" height="13" rx="2" fill="#e3edfc" stroke="#5b93e6" stroke-width="1.1"/><rect x="4.5" y="4.5" width="7" height="7" fill="#fff" stroke="#5b93e6"/></svg>
<span class="t" style="left:42px;top:408.3px;height:14px;line-height:14px;font-size:10px;color:#545454;">电梯井</span>
<div style="left:0px;top:426px;width:105px;height:22px;background:#d5e4f8;"></div>
<svg style="left:14px;top:428.4px;" width="16" height="16" viewBox="0 0 16 16"><path d="M1 10 L10 3 L15 5.5 L6 13 Z M3.5 8.5 L8 11 M6 6.5 L10.5 9 M8.5 4.5 L13 7" fill="#bcd4f5" stroke="#3b7fd9" stroke-width="1.2"/></svg>
<span class="t" style="left:42px;top:431.3px;height:14px;line-height:14px;font-size:10px;color:#545454;">钢楼梯</span>
<svg style="left:14px;top:452.4px;" width="16" height="16" viewBox="0 0 16 16"><path d="M1 5 H15 M1 9 H15 M4 5 L7 9 M12 5 L9 9" fill="none" stroke="#5b93e6" stroke-width="1.2"/></svg>
<span class="t" style="left:42px;top:455.3px;height:14px;line-height:14px;font-size:10px;color:#545454;">转换桁架</span>
<svg style="left:14px;top:475.4px;" width="16" height="16" viewBox="0 0 16 16"><path d="M7 4 V14 M12 2 V14 M7 7 H12 M7 10.5 H12 M3 3 Q5 1.5 6 4" fill="none" stroke="#5b93e6" stroke-width="1.1"/></svg>
<span class="t" style="left:42px;top:478.3px;height:14px;line-height:14px;font-size:10px;color:#545454;">钢爬梯</span>
<svg style="left:14px;top:498.4px;" width="16" height="16" viewBox="0 0 16 16"><path d="M1 13.5 H15 M2 11 H14 M8 2 V11 M8 4 L3.5 11 M8 4 L12.5 11" fill="none" stroke="#5b93e6" stroke-width="1.2"/></svg>
<span class="t" style="left:42px;top:501.3px;height:14px;line-height:14px;font-size:10px;color:#545454;">异形构件</span>
<svg style="left:14px;top:522.4px;" width="16" height="16" viewBox="0 0 16 16"><path d="M3 4 V12.5 Q3 14 8 14 Q13 14 13 12.5 V4 Q13 2 8 2 Q3 2 3 4 Q3 5.5 8 5.5 Q13 5.5 13 4" fill="none" stroke="#5b93e6" stroke-width="1.1"/></svg>
<span class="t" style="left:42px;top:525.3px;height:14px;line-height:14px;font-size:10px;color:#545454;">钢管束</span>
<svg style="left:14px;top:545.4px;" width="16" height="16" viewBox="0 0 16 16"><path d="M1.5 2 H14.5 V14 H1.5 Z M6 2 V14 M6 7 H14.5" fill="none" stroke="#5b93e6" stroke-width="1.2"/></svg>
<span class="t" style="left:42px;top:548.3px;height:14px;line-height:14px;font-size:10px;color:#545454;">自定义组合</span>
<div style="left:0px;top:567px;width:105px;height:21px;background:#f0f0f0;"></div>
<span class="t" style="left:3px;top:571.3px;height:14px;line-height:14px;font-size:10px;color:#545454;">配件</span>
<svg style="left:14px;top:592.4px;" width="16" height="16" viewBox="0 0 16 16"><path d="M2 6 L13 2.5 L14.5 4 V10 L4 13.5 L2 12 Z" fill="#dbe8fa" stroke="#5b93e6" stroke-width="1.2"/></svg>
<span class="t" style="left:42px;top:595.3px;height:14px;line-height:14px;font-size:10px;color:#545454;">钢板(G)</span>
<svg style="left:14px;top:615.4px;" width="16" height="16" viewBox="0 0 16 16"><path d="M8 1.5 L13.6 4.7 V11.3 L8 14.5 L2.4 11.3 V4.7 Z" fill="#e3edfb" stroke="#5b93e6" stroke-width="1.1"/><circle cx="8" cy="8" r="2.6" fill="#fff" stroke="#5b93e6"/></svg>
<span class="t" style="left:42px;top:618.3px;height:14px;line-height:14px;font-size:10px;color:#545454;">螺栓(S)</span>
<svg style="left:14px;top:639.4px;" width="16" height="16" viewBox="0 0 16 16"><rect x="1.5" y="2.5" width="13" height="4" rx="2" fill="none" stroke="#5b93e6" stroke-width="1.1"/><path d="M6 6.5 V14 H10 V6.5" fill="none" stroke="#5b93e6" stroke-width="1.1"/></svg>
<span class="t" style="left:42px;top:642.3px;height:14px;line-height:14px;font-size:10px;color:#545454;">栓钉(D)</span>
<div style="left:107px;top:202px;width:6px;height:330px;background:#c9c9c9;border-radius:3px;"></div>
<div style="left:117px;top:138px;width:3px;height:522px;background:#f7f7f7;"></div>
<div style="left:120px;top:138px;width:272px;height:178px;background:#ffffff;"></div>
<div style="left:120px;top:138px;width:272px;height:10px;background:linear-gradient(#eeeeee,#e3e3e3);"></div>
<svg style="left:384px;top:140px;" width="6" height="6" viewBox="0 0 6 6"><path d="M0.5 0.5 L5 5 M5 0.5 L0.5 5" stroke="#aaa" stroke-width="0.9"/></svg>
<div style="left:120px;top:148px;width:272px;height:17px;background:#f3f3f3;"></div>
<span class="t" style="left:127px;top:150.8px;height:14px;line-height:14px;font-size:10px;color:#777;">构件列表</span>
<div style="left:120px;top:166px;width:272px;height:24px;background:#fdfdfd;"></div>
<svg style="left:124px;top:172px;" width="13" height="13" viewBox="0 0 13 13"><path d="M0.5 3.5 V12 H11.5 V3.5 L8.5 0.5 H3.5" fill="none" stroke="#55606e"/><rect x="0" y="0" width="3" height="3" fill="#3b7fd9"/></svg>
<span class="t" style="left:141px;top:172.8px;height:14px;line-height:14px;font-size:10px;color:#525252;">新建</span>
<svg style="left:166px;top:178px;" width="5" height="3" viewBox="0 0 5 3"><path d="M0 0 H4 L2 2.4 Z" fill="#888"/></svg>
<svg style="left:178px;top:172px;" width="13" height="13" viewBox="0 0 13 13"><rect x="0.5" y="3.5" width="8" height="8.5" rx="1.5" fill="#fff" stroke="#55606e"/><rect x="3.5" y="0.5" width="8.5" height="8" rx="1.5" fill="#dbe7fb" stroke="#3b7fd9"/></svg>
<span class="t" style="left:193px;top:172.8px;height:14px;line-height:14px;font-size:10px;color:#525252;">复制</span>
<svg style="left:222px;top:172px;" width="12" height="13" viewBox="0 0 12 13"><path d="M0.5 2.5 H11 M3.5 2.5 V0.5 H8 V2.5 M1.5 2.5 V12 H10 V2.5" fill="none" stroke="#55606e"/><path d="M4.3 5 V9.5 M7.2 5 V9.5" stroke="#c0504d"/></svg>
<span class="t" style="left:237px;top:172.8px;height:14px;line-height:14px;font-size:10px;color:#525252;">删除</span>
<svg style="left:263px;top:172px;" width="14" height="13" viewBox="0 0 14 13"><path d="M0.5 8 V5.5 H4 M0.5 8 Q1 11.5 5 11.5 H9.5 V8.5" fill="none" stroke="#55606e"/><rect x="4.5" y="0.5" width="9" height="8" rx="1.5" fill="#dbe7fb" stroke="#3b7fd9"/></svg>
<span class="t" style="left:281px;top:172.8px;height:14px;line-height:14px;font-size:10px;color:#525252;">层间复制构件</span>
<div style="left:121px;top:191px;width:270px;height:15px;background:#fafafa;border-bottom:1px solid #e6e6e6;"></div>
<span class="t" style="left:123px;top:191.8px;height:14px;line-height:14px;font-size:10px;color:#c4c4c4;">搜索构件...</span>
<svg style="left:377px;top:194px;" width="9" height="9" viewBox="0 0 9 9"><circle cx="4" cy="4" r="3" fill="none" stroke="#c0c0c0"/><path d="M6.2 6.2 L8.5 8.5" stroke="#c0c0c0"/></svg>
<div style="left:120px;top:206px;width:272px;height:108px;background:#ffffff;border:1px solid #e4e4e4;"></div>
<svg style="left:132px;top:216px;" width="5" height="4" viewBox="0 0 5 4"><path d="M0 0 H5 L2.5 3 Z" fill="#666"/></svg>
<span class="t" style="left:140px;top:211.8px;height:14px;line-height:14px;font-size:10px;color:#545454;">钢楼梯</span>
<div style="left:154px;top:230px;width:53px;height:17px;background:#cfe0f7;"></div>
<span class="t" style="left:157.5px;top:232.3px;height:14px;line-height:14px;font-size:10px;color:#46526a;letter-spacing:0.45px;">GT-1 &lt;0&gt;</span>
<div style="left:120px;top:314px;width:272px;height:3px;background:#f0f0f0;"></div>
<div style="left:120px;top:317px;width:272px;height:343px;background:#ffffff;"></div>
<div style="left:120px;top:317px;width:272px;height:10px;background:linear-gradient(#eeeeee,#e3e3e3);"></div>
<svg style="left:384px;top:319px;" width="6" height="6" viewBox="0 0 6 6"><path d="M0.5 0.5 L5 5 M5 0.5 L0.5 5" stroke="#aaa" stroke-width="0.9"/></svg>
<div style="left:120px;top:327px;width:272px;height:20px;background:#f3f3f3;"></div>
<div style="left:157px;top:329px;width:52px;height:17px;background:#e9e9e9;border-radius:2px 2px 0 0;"></div>
<span class="t" style="left:127px;top:330.8px;height:14px;line-height:14px;font-size:10px;color:#222;font-weight:bold;">属性</span>
<span class="t" style="left:162px;top:330.8px;height:14px;line-height:14px;font-size:10px;color:#a0a0a0;">位置控点</span>
<div style="left:120px;top:346px;width:272px;height:18px;background:#fcfcfc;border-top:1px solid #e8e8e8;border-bottom:1px solid #e0e0e0;"></div>
<span class="t" style="left:138px;top:349.3px;height:14px;line-height:14px;font-size:10px;color:#545454;width:105px;text-align:center;">属性名称</span>
<span class="t" style="left:243px;top:349.3px;height:14px;line-height:14px;font-size:10px;color:#545454;width:114px;text-align:center;">属性值</span>
<span class="t" style="left:358px;top:349.3px;height:14px;line-height:14px;font-size:10px;color:#545454;width:32px;text-align:center;">附加</span>
<div style="left:120px;top:381px;width:270px;height:1px;background:#ececec;"></div>
<span class="t" style="left:127px;top:366.8px;height:14px;line-height:14px;font-size:10px;color:#545454;">1</span>
<span class="t" style="left:142px;top:366.8px;height:14px;line-height:14px;font-size:10px;color:#2f55d0;">名称</span>
<span class="t" style="left:246px;top:366.8px;height:14px;line-height:14px;font-size:10px;color:#545454;">GT-1</span>
<div style="left:120px;top:398px;width:270px;height:1px;background:#ececec;"></div>
<span class="t" style="left:127px;top:384.3px;height:14px;line-height:14px;font-size:10px;color:#545454;">2</span>
<span class="t" style="left:142px;top:384.3px;height:14px;line-height:14px;font-size:10px;color:#2f55d0;">结构类别</span>
<span class="t" style="left:246px;top:384.3px;height:14px;line-height:14px;font-size:10px;color:#aaaaaa;">钢楼梯</span>
<div style="left:120px;top:416px;width:270px;height:1px;background:#ececec;"></div>
<span class="t" style="left:127px;top:401.8px;height:14px;line-height:14px;font-size:10px;color:#545454;">3</span>
<span class="t" style="left:142px;top:401.8px;height:14px;line-height:14px;font-size:10px;color:#545454;">清单类型</span>
<span class="t" style="left:246px;top:401.8px;height:14px;line-height:14px;font-size:10px;color:#545454;">钢梯</span>
<div style="left:368px;top:402px;width:12px;height:12px;background:#fff;border:1px solid #bdbdbd;border-radius:1px;"></div>
<div style="left:120px;top:434px;width:270px;height:1px;background:#ececec;"></div>
<span class="t" style="left:127px;top:419.3px;height:14px;line-height:14px;font-size:10px;color:#545454;">4</span>
<span class="t" style="left:142px;top:419.3px;height:14px;line-height:14px;font-size:10px;color:#545454;">汇总类型</span>
<span class="t" style="left:246px;top:419.3px;height:14px;line-height:14px;font-size:10px;color:#545454;">钢楼梯</span>
<div style="left:120px;top:451px;width:270px;height:1px;background:#ececec;"></div>
<span class="t" style="left:127px;top:436.8px;height:14px;line-height:14px;font-size:10px;color:#545454;">5</span>
<span class="t" style="left:142px;top:436.8px;height:14px;line-height:14px;font-size:10px;color:#545454;">定额子目</span>
<span class="t" style="left:246px;top:436.8px;height:14px;line-height:14px;font-size:10px;color:#545454;"></span>
<div style="left:368px;top:438px;width:12px;height:12px;background:#fff;border:1px solid #bdbdbd;border-radius:1px;"></div>
<div style="left:120px;top:468px;width:270px;height:1px;background:#ececec;"></div>
<span class="t" style="left:127px;top:454.3px;height:14px;line-height:14px;font-size:10px;color:#545454;">6</span>
<span class="t" style="left:142px;top:454.3px;height:14px;line-height:14px;font-size:10px;color:#545454;">备注</span>
<span class="t" style="left:246px;top:454.3px;height:14px;line-height:14px;font-size:10px;color:#545454;"></span>
<div style="left:368px;top:455px;width:12px;height:12px;background:#fff;border:1px solid #bdbdbd;border-radius:1px;"></div>
<div style="left:138px;top:347px;width:1px;height:122px;background:#ececec;"></div>
<div style="left:242px;top:347px;width:1px;height:122px;background:#ececec;"></div>
<div style="left:357px;top:347px;width:1px;height:122px;background:#ececec;"></div>
<div style="left:390px;top:347px;width:1px;height:122px;background:#ececec;"></div>
<div style="left:392px;top:138px;width:5px;height:522px;background:#fbfbfb;"></div>
<div style="left:393.2px;top:358.5px;width:3.8px;height:83px;background:#70727e;"></div>
<div style="left:397px;top:138px;width:653px;height:522px;overflow:hidden;background:#1e2448;"><svg style="left:-397px;top:-138px;filter:blur(0.55px);" width="1280" height="718" viewBox="0 0 1280 718"><rect x="397" y="138" width="653" height="522" fill="#1e2448"/><line x1="485.6" y1="145" x2="485.6" y2="636" stroke="#3f3642" stroke-width="2" stroke-opacity="0.95"/><line x1="587" y1="138" x2="587" y2="660" stroke="#521f4c" stroke-width="1.8" stroke-opacity="0.9"/><line x1="825.6" y1="138" x2="825.6" y2="660" stroke="#431d4c" stroke-width="2.4" stroke-opacity="0.9"/><line x1="839" y1="138" x2="839" y2="660" stroke="#3f3440" stroke-width="1.6" stroke-opacity="0.9"/><line x1="1013.3" y1="138" x2="1013.3" y2="660" stroke="#581a3e" stroke-width="3.4"/><line x1="1024.3" y1="319" x2="1024.3" y2="660" stroke="#581a3e" stroke-width="3"/><line x1="397" y1="590.6" x2="531" y2="590.6" stroke="#5a1f47" stroke-width="1.8" stroke-opacity="0.45"/><line x1="547" y1="590.5" x2="777" y2="590.5" stroke="#5a1f47" stroke-width="1.6" stroke-opacity="0.3"/><line x1="794" y1="590.5" x2="1012" y2="590.5" stroke="#5a1f47" stroke-width="1.8" stroke-opacity="0.9"/><line x1="440" y1="170" x2="531" y2="170" stroke="#5a1f47" stroke-width="1.6" stroke-opacity="0.6"/><line x1="607" y1="159.5" x2="690" y2="159.5" stroke="#4f6f86" stroke-width="1" stroke-opacity="0.7"/><line x1="425" y1="138" x2="425" y2="660" stroke="#3a2a55" stroke-width="1" stroke-opacity="0.25"/><line x1="432" y1="138" x2="432" y2="660" stroke="#3a2a55" stroke-width="1" stroke-opacity="0.2"/><line x1="460" y1="138" x2="460" y2="660" stroke="#3a2a55" stroke-width="1" stroke-opacity="0.2"/><line x1="470" y1="138" x2="470" y2="660" stroke="#3a2a55" stroke-width="1" stroke-opacity="0.2"/><line x1="735" y1="138" x2="735" y2="660" stroke="#3a2a55" stroke-width="1" stroke-opacity="0.3"/><line x1="561" y1="138" x2="561" y2="660" stroke="#3a2a55" stroke-width="1" stroke-opacity="0.3"/><rect x="547" y="286" width="230" height="312" fill="#24265a" stroke="none" stroke-width="1" opacity="0.22"/><line x1="603" y1="238" x2="603" y2="591" stroke="#2c5a4f" stroke-width="1.6"/><line x1="722.5" y1="238" x2="722.5" y2="591" stroke="#2c5a4f" stroke-width="1.6"/><line x1="602" y1="238.5" x2="723" y2="238.5" stroke="#2c5a4f" stroke-width="1.4"/><line x1="602" y1="178" x2="690" y2="178" stroke="#28615a" stroke-width="1"/><path d="M549 290 A114.5 114.5 0 0 1 641 187.5" fill="none" stroke="#393d62" stroke-width="2" stroke-dasharray="10 9" stroke-dashoffset="4"/><path d="M686 187.8 A114.5 114.5 0 0 1 776 290" fill="none" stroke="#30345a" stroke-width="2" stroke-dasharray="10 9"/><path d="M623 257 L645 257 L634 268 Z" fill="none" stroke="#48305a" stroke-width="1.8"/><line x1="645" y1="256.5" x2="690" y2="256.5" stroke="#48305a" stroke-width="1.2"/><line x1="548" y1="297.7" x2="654" y2="297.7" stroke="#5e6047" stroke-width="1.6" stroke-opacity="0.95"/><line x1="671" y1="297.7" x2="777" y2="297.7" stroke="#58604a" stroke-width="1.6" stroke-opacity="0.95"/><line x1="548" y1="318.4" x2="654" y2="318.4" stroke="#5e6047" stroke-width="1.6" stroke-opacity="0.95"/><line x1="671" y1="318.4" x2="777" y2="318.4" stroke="#58604a" stroke-width="1.6" stroke-opacity="0.95"/><line x1="548" y1="339.1" x2="654" y2="339.1" stroke="#5e6047" stroke-width="1.6" stroke-opacity="0.95"/><line x1="671" y1="339.1" x2="777" y2="339.1" stroke="#58604a" stroke-width="1.6" stroke-opacity="0.95"/><line x1="548" y1="359.8" x2="654" y2="359.8" stroke="#5e6047" stroke-width="1.6" stroke-opacity="0.95"/><line x1="671" y1="359.8" x2="777" y2="359.8" stroke="#58604a" stroke-width="1.6" stroke-opacity="0.95"/><line x1="548" y1="380.5" x2="654" y2="380.5" stroke="#5e6047" stroke-width="1.6" stroke-opacity="0.95"/><line x1="671" y1="380.5" x2="777" y2="380.5" stroke="#58604a" stroke-width="1.6" stroke-opacity="0.95"/><line x1="548" y1="401.2" x2="654" y2="401.2" stroke="#5e6047" stroke-width="1.6" stroke-opacity="0.95"/><line x1="671" y1="401.2" x2="777" y2="401.2" stroke="#58604a" stroke-width="1.6" stroke-opacity="0.95"/><line x1="548" y1="421.9" x2="654" y2="421.9" stroke="#5e6047" stroke-width="1.6" stroke-opacity="0.95"/><line x1="671" y1="421.9" x2="777" y2="421.9" stroke="#58604a" stroke-width="1.6" stroke-opacity="0.95"/><line x1="548" y1="442.6" x2="654" y2="442.6" stroke="#5e6047" stroke-width="1.6" stroke-opacity="0.95"/><line x1="671" y1="442.6" x2="777" y2="442.6" stroke="#58604a" stroke-width="1.6" stroke-opacity="0.95"/><line x1="548" y1="463.3" x2="654" y2="463.3" stroke="#5e6047" stroke-width="1.6" stroke-opacity="0.95"/><line x1="671" y1="463.3" x2="777" y2="463.3" stroke="#58604a" stroke-width="1.6" stroke-opacity="0.95"/><line x1="548" y1="484.0" x2="654" y2="484.0" stroke="#5e6047" stroke-width="1.6" stroke-opacity="0.95"/><line x1="671" y1="484.0" x2="777" y2="484.0" stroke="#58604a" stroke-width="1.6" stroke-opacity="0.95"/><line x1="548" y1="504.7" x2="654" y2="504.7" stroke="#5e6047" stroke-width="1.6" stroke-opacity="0.95"/><line x1="671" y1="504.7" x2="777" y2="504.7" stroke="#58604a" stroke-width="1.6" stroke-opacity="0.95"/><line x1="548" y1="525.4" x2="654" y2="525.4" stroke="#5e6047" stroke-width="1.6" stroke-opacity="0.95"/><line x1="671" y1="525.4" x2="777" y2="525.4" stroke="#58604a" stroke-width="1.6" stroke-opacity="0.95"/><line x1="548" y1="546.1" x2="654" y2="546.1" stroke="#5e6047" stroke-width="1.6" stroke-opacity="0.95"/><line x1="671" y1="546.1" x2="777" y2="546.1" stroke="#58604a" stroke-width="1.6" stroke-opacity="0.95"/><line x1="548" y1="566.8" x2="654" y2="566.8" stroke="#5e6047" stroke-width="1.6" stroke-opacity="0.95"/><line x1="671" y1="566.8" x2="777" y2="566.8" stroke="#58604a" stroke-width="1.6" stroke-opacity="0.95"/><line x1="548" y1="587.5" x2="654" y2="587.5" stroke="#5e6047" stroke-width="1.6" stroke-opacity="0.95"/><line x1="671" y1="587.5" x2="777" y2="587.5" stroke="#58604a" stroke-width="1.6" stroke-opacity="0.95"/><rect x="653.7" y="285.5" width="18" height="313.8" fill="none" stroke="#606149" stroke-width="1.2"/><rect x="658.3" y="290.5" width="9" height="304.5" fill="#1e2448" stroke="#606149" stroke-width="1.2"/><path d="M670 515.6 L719.5 497.5 L721.5 500.5 L724 488.5 L725.5 490.7 L777 472.7" fill="none" stroke="#6a6b50" stroke-width="1.5"/><rect x="794" y="401" width="256" height="18" fill="#1c2a44" stroke="none" stroke-width="1" opacity="0.55"/><line x1="794" y1="401" x2="1051" y2="401" stroke="#214a46" stroke-width="1.5" stroke-opacity="0.9"/><line x1="794" y1="419.3" x2="1051" y2="419.3" stroke="#214a46" stroke-width="1.4" stroke-opacity="0.9"/><rect x="794" y="423.7" width="256" height="15.8" fill="#34ad8c"/><line x1="839" y1="423.7" x2="839" y2="439.5" stroke="#1f5a55" stroke-width="1.4"/><line x1="875" y1="423.7" x2="875" y2="439.5" stroke="#1f5a55" stroke-width="1.4"/><line x1="907" y1="423.7" x2="907" y2="439.5" stroke="#1f5a55" stroke-width="1.4"/><line x1="1012" y1="423.7" x2="1012" y2="439.5" stroke="#1f5a55" stroke-width="1.4"/><line x1="1023.5" y1="423.7" x2="1023.5" y2="439.5" stroke="#1f5a55" stroke-width="1.4"/><rect x="555" y="162" width="467" height="16.4" fill="#34ad8c"/><line x1="555" y1="170.2" x2="936" y2="170.2" stroke="#1c4a4c" stroke-width="1.2"/><rect x="555" y="162" width="215" height="7" fill="#35b890"/><line x1="875" y1="162" x2="875" y2="178.4" stroke="#1f6a5c" stroke-width="1.3"/><line x1="908" y1="162" x2="908" y2="178.4" stroke="#1f6a5c" stroke-width="1.3"/><line x1="1012" y1="162" x2="1012" y2="178.4" stroke="#1f6a5c" stroke-width="1.3"/><ellipse cx="951.5" cy="170.2" rx="15" ry="9.3" fill="#30ab88" stroke="#23806b" stroke-width="1.3"/><ellipse cx="952" cy="170.2" rx="4.5" ry="7" fill="#6f9f9a" opacity="0.75"/><path d="M898 165 Q906 166 910 177" fill="none" stroke="#1f6a5c" stroke-width="1.2"/><rect x="531" y="186" width="16" height="474" fill="#34ad8c"/><line x1="539" y1="186" x2="539" y2="390" stroke="#1f6b5c" stroke-width="1.3"/><line x1="539" y1="450" x2="539" y2="640" stroke="#1f6b5c" stroke-width="1.3"/><rect x="777" y="186" width="17" height="474" fill="#34ad8c"/><line x1="785.5" y1="186" x2="785.5" y2="395" stroke="#1f7a66" stroke-width="1.3"/><line x1="785.5" y1="440" x2="785.5" y2="640" stroke="#1f7a66" stroke-width="1.3"/><rect x="779" y="398" width="10" height="14" fill="none" stroke="#1f8a70" stroke-width="1"/><rect x="603" y="159" width="119" height="16" fill="none" stroke="#1d5f58" stroke-width="1.1" opacity="0.8"/><path d="M482 509 L489 502 M835.5 509 L842.5 502" stroke="#4a4560" stroke-width="2"/><rect x="531.4" y="163" width="23.5" height="23" fill="#1e2a47" stroke="#8f7396" stroke-width="1.6"/><rect x="536" y="167" width="5" height="3" fill="#23564f" stroke="none" stroke-width="1" opacity="0.8"/><rect x="545" y="175" width="2" height="8" fill="#2a6a5a" stroke="none" stroke-width="1" opacity="0.8"/><rect x="770.6" y="163" width="23" height="23" fill="#1e2a47" stroke="#8f7396" stroke-width="1.6"/><rect x="774" y="166" width="15" height="16" fill="#21463f" stroke="none" stroke-width="1" opacity="0.7"/><rect x="398" y="160" width="17" height="22" fill="#1c2a3a" stroke="none" stroke-width="1" opacity="0.7"/><text x="402.5" y="176" font-size="16.5" fill="#f4f4f4" text-anchor="start" stroke="#f4f4f4" stroke-width="0.35" textLength="8.8" lengthAdjust="spacingAndGlyphs">G</text><rect x="528" y="138" width="21" height="22" fill="#1c2a36" stroke="none" stroke-width="1" opacity="0.5"/><text x="535.3" y="154" font-size="15.5" fill="#f4f4f4" text-anchor="start" stroke="#f4f4f4" stroke-width="0.35" textLength="7.8" lengthAdjust="spacingAndGlyphs">9</text><rect x="774" y="138" width="23" height="22" fill="#1c2a36" stroke="none" stroke-width="1" opacity="0.5"/><text x="777.8" y="154" font-size="16.5" fill="#f4f4f4" text-anchor="start" font-family="Liberation Serif, serif" stroke="#f4f4f4" stroke-width="0.35" textLength="16" lengthAdjust="spacingAndGlyphs">11</text><text x="403" y="598" font-size="15.5" fill="#f4f4f4" text-anchor="start" stroke="#f4f4f4" stroke-width="0.35" textLength="7" lengthAdjust="spacingAndGlyphs">F</text><text x="444" y="159.5" font-size="16" fill="#747995" text-anchor="start" transform="rotate(-90 444 159.5)" textLength="18" lengthAdjust="spacingAndGlyphs">100</text><text x="470" y="184" font-size="16" fill="#747995" text-anchor="start" transform="rotate(-90 470 184)" textLength="18" lengthAdjust="spacingAndGlyphs">100</text><text x="870" y="160" font-size="16" fill="#747995" text-anchor="start" transform="rotate(-90 870 160)" textLength="18" lengthAdjust="spacingAndGlyphs">100</text><text x="895.5" y="255" font-size="16.5" fill="#747995" text-anchor="start" transform="rotate(-90 895.5 255)" textLength="30" lengthAdjust="spacingAndGlyphs">1500</text><text x="470.5" y="458" font-size="16.5" fill="#747995" text-anchor="start" transform="rotate(-90 470.5 458)" textLength="27" lengthAdjust="spacingAndGlyphs">6700</text><text x="438" y="522.5" font-size="16.5" fill="#747995" text-anchor="start" transform="rotate(-90 438 522.5)" textLength="27" lengthAdjust="spacingAndGlyphs">8500</text><text x="927" y="522.5" font-size="16.5" fill="#747995" text-anchor="start" transform="rotate(-90 927 522.5)" textLength="27" lengthAdjust="spacingAndGlyphs">8500</text><text x="894.3" y="480" font-size="16.5" fill="#747995" text-anchor="start" transform="rotate(-90 894.3 480)" textLength="37" lengthAdjust="spacingAndGlyphs">260*14</text><text x="894.3" y="424.5" font-size="16.5" fill="#747995" text-anchor="start" transform="rotate(-90 894.3 424.5)" textLength="19" lengthAdjust="spacingAndGlyphs">540</text><text x="645" y="195.6" font-size="16.5" fill="#8388a4" text-anchor="start" textLength="34" lengthAdjust="spacingAndGlyphs">C1527</text><text x="653.5" y="234.5" font-size="13.5" fill="#70759a" text-anchor="start" textLength="31.5" lengthAdjust="spacingAndGlyphs">(5.850)</text><text x="659" y="253.5" font-size="15" fill="#7f84a0" text-anchor="start" textLength="26" lengthAdjust="spacingAndGlyphs">1.950</text><text x="589.5" y="626.2" font-size="16.5" fill="#747995" text-anchor="start" textLength="26" lengthAdjust="spacingAndGlyphs">1400</text><text x="653" y="626.2" font-size="16.5" fill="#747995" text-anchor="start" textLength="19" lengthAdjust="spacingAndGlyphs">100</text><text x="709" y="626.2" font-size="16.5" fill="#747995" text-anchor="start" textLength="26" lengthAdjust="spacingAndGlyphs">1400</text><path d="M601.5 595.5 H612 M606.5 595.5 V608" stroke="#5a5f7c" stroke-width="1.2" fill="none"/><path d="M721 603.5 H732.5 M726.5 593 V603.5" stroke="#5a5f7c" stroke-width="1.2" fill="none"/><path d="M438 616 V602" stroke="#22e022" stroke-width="2.8"/><path d="M433.7 604 L438 595.5 L442.3 604 Z" fill="#22e022"/><path d="M442 619.4 H454" stroke="#f01820" stroke-width="2.8"/><path d="M452 615.8 L462.5 619.4 L452 623 Z" fill="#f01820"/><circle cx="437.6" cy="619.4" r="4.4" fill="#1414d0"/><text x="434.2" y="594.5" font-size="14.5" fill="#2adf2a" text-anchor="start" font-weight="bold" textLength="7.8" lengthAdjust="spacingAndGlyphs">Y</text><text x="464.3" y="623.8" font-size="14" fill="#e8242c" text-anchor="start" font-weight="bold" textLength="7.8" lengthAdjust="spacingAndGlyphs">X</text><rect x="397" y="638" width="653" height="22" fill="#363742" stroke="none" stroke-width="1" opacity="0.94"/><text x="580" y="656.5" font-size="16" fill="#5d5f70" text-anchor="start" textLength="14" lengthAdjust="spacingAndGlyphs">10</text><path d="M616.5 654.5 L621.3 649.7 M617.3 649.7 H621.3 V653.7 M628.3 642.7 L623.5 647.5 M623.5 643.5 V647.5 H627.5" stroke="#e8e8e8" stroke-width="1.2" fill="none"/><text x="631.5" y="653.5" font-size="10.3" fill="#f4f4f4" text-anchor="start" font-weight="bold" textLength="200" lengthAdjust="spacingAndGlyphs">按鼠标左键指定第一个角点，或拾取构件图元</text><path d="M746.9 487.8 V497.8 L749.2 495.5 L751.1 499.4 L752.7 498.6 L750.9 494.9 L754 494.9 Z" fill="#ffffff" stroke="#1a1a2a" stroke-width="0.5"/></svg></div>
<div style="left:1023.4px;top:138px;width:26.6px;height:181.5px;background:#ffffff;border-radius:0 0 0 2px;"></div>
<svg style="left:1027px;top:148px;" width="18" height="18" viewBox="0 0 18 18"><ellipse cx="9" cy="9" rx="7.5" ry="6" fill="none" stroke="#6a7388" stroke-width="1.2" transform="rotate(-25 9 9)"/><path d="M2.5 12.5 Q9 11 15.5 5.5" fill="none" stroke="#6a8fd8" stroke-width="1"/></svg>
<svg style="left:1027px;top:173px;" width="18" height="18" viewBox="0 0 18 18"><path d="M1.5 6 H12.5 V16.5 H1.5 Z M1.5 6 L5.5 2 H16.5 L12.5 6 M16.5 2 V12.5 L12.5 16.5" fill="none" stroke="#6a7388" stroke-width="1.1"/><rect x="4" y="9" width="6" height="5" fill="#8fb5ec"/></svg>
<svg style="left:1027px;top:196px;" width="18" height="18" viewBox="0 0 18 18"><path d="M1.5 6 H12.5 V16.5 H1.5 Z M1.5 6 L5.5 2 H16.5 L12.5 6 M16.5 2 V12.5 L12.5 16.5" fill="none" stroke="#6a7388" stroke-width="1.1"/></svg>
<svg style="left:1033.5px;top:220.5px;" width="6" height="4" viewBox="0 0 6 4"><path d="M0 0 H5 L2.5 3 Z" fill="#555"/></svg>
<svg style="left:1027px;top:229px;" width="18" height="18" viewBox="0 0 18 18"><path d="M1.5 6 H12.5 V16.5 H1.5 Z" fill="#a8c8f4" stroke="#3b7fd9" stroke-width="1.1"/><path d="M1.5 6 L5.5 2 H16.5 L12.5 6 M16.5 2 V12.5 L12.5 16.5" fill="none" stroke="#3b7fd9" stroke-width="1.1"/></svg>
<svg style="left:1033.5px;top:253px;" width="6" height="4" viewBox="0 0 6 4"><path d="M0 0 H5 L2.5 3 Z" fill="#555"/></svg>
<svg style="left:1026.5px;top:261px;" width="19" height="19" viewBox="0 0 19 19"><path d="M1.5 6 V3 Q1.5 1.5 3 1.5 H6 M13 1.5 H16 Q17.5 1.5 17.5 3 V6 M17.5 13 V16 Q17.5 17.5 16 17.5 H13 M6 17.5 H3 Q1.5 17.5 1.5 16 V13" fill="none" stroke="#4a5360" stroke-width="1.5"/></svg>
<div style="left:1027px;top:285px;width:19px;height:1.2px;background:#b0b0b0;"></div>
<svg style="left:1027.5px;top:290.5px;" width="18" height="18" viewBox="0 0 18 18"><path d="M10 16.5 H1.5 V1.5 H16.5 V10" fill="none" stroke="#6a7388" stroke-width="1.1"/><path d="M4 5.5 H14 M4 8.5 H11 M4 11.5 H8" stroke="#8a93a0"/><circle cx="14" cy="14" r="3" fill="#e8efff" stroke="#5b7fe0"/><circle cx="14" cy="14" r="1" fill="#5b7fe0"/></svg>
<div style="left:1050px;top:138px;width:5px;height:522px;background:#f8f8f8;"></div>
<div style="left:1050.2px;top:359px;width:3.6px;height:82.5px;background:#6c6e7a;"></div>
<div style="left:1055px;top:138px;width:225px;height:522px;background:#ffffff;"></div>
<div style="left:1055px;top:138px;width:225px;height:10px;background:linear-gradient(#eeeeee,#e3e3e3);"></div>
<svg style="left:1272px;top:140px;" width="6" height="6" viewBox="0 0 6 6"><path d="M0.5 0.5 L5 5 M5 0.5 L0.5 5" stroke="#aaa" stroke-width="0.9"/></svg>
<div style="left:1055px;top:148px;width:225px;height:17px;background:#f3f3f3;"></div>
<span class="t" style="left:1062px;top:150.8px;height:14px;line-height:14px;font-size:10px;color:#777;">图纸列表</span>
<div style="left:1055px;top:166px;width:225px;height:24px;background:#fdfdfd;"></div>
<svg style="left:1059px;top:172px;" width="13" height="13" viewBox="0 0 13 13"><path d="M0.5 5 V1.5 H8 L11.5 5 V12 H0.5 V9" fill="none" stroke="#55606e"/><path d="M0 7 H6 M3 4 V10" stroke="#3b7fd9" stroke-width="1.3"/></svg>
<span class="t" style="left:1074px;top:172.8px;height:14px;line-height:14px;font-size:10px;color:#525252;">添加图纸</span>
<svg style="left:1121px;top:178px;" width="5" height="3" viewBox="0 0 5 3"><path d="M0 0 H4 L2 2.4 Z" fill="#888"/></svg>
<svg style="left:1130px;top:172px;" width="13" height="13" viewBox="0 0 13 13"><path d="M0.5 12 V0.5 H7.5 L11.5 4.5 V7" fill="none" stroke="#55606e" stroke-dasharray="2 1.2"/><path d="M6 12.5 L8.7 6.5 L11.5 12.5 M7 10.5 H10.5" fill="none" stroke="#3b7fd9"/></svg>
<span class="t" style="left:1146px;top:172.8px;height:14px;line-height:14px;font-size:10px;color:#525252;">分割</span>
<svg style="left:1173px;top:178px;" width="5" height="3" viewBox="0 0 5 3"><path d="M0 0 H4 L2 2.4 Z" fill="#888"/></svg>
<svg style="left:1182px;top:172px;" width="13" height="13" viewBox="0 0 13 13"><path d="M0.5 12 V2 H7.5 L11.5 5 V12.5 H0.5" fill="none" stroke="#55606e" stroke-dasharray="2 1.2"/><path d="M5 0.5 Q8 -0.5 9.5 2 L8 2.5 M9.5 2 L10 0.5" fill="none" stroke="#3b7fd9"/></svg>
<span class="t" style="left:1199px;top:172.8px;height:14px;line-height:14px;font-size:10px;color:#525252;">定位</span>
<svg style="left:1227px;top:172px;" width="12" height="13" viewBox="0 0 12 13"><path d="M0.5 2.5 H11 M3.5 2.5 V0.5 H8 V2.5 M1.5 2.5 V12 H10 V2.5" fill="none" stroke="#94706e"/><path d="M4.3 5 V9.5 M7.2 5 V9.5" stroke="#c0504d"/></svg>
<span class="t" style="left:1243px;top:172.8px;height:14px;line-height:14px;font-size:10px;color:#525252;">删除</span>
<div style="left:1055px;top:190.5px;width:173px;height:17.5px;background:#fcfcfc;border-bottom:1px solid #e6e6e6;"></div>
<div style="left:1055px;top:190.5px;width:104.5px;height:17.5px;background:#5aa5f4;"></div>
<span class="t" style="left:1055px;top:193.3px;height:14px;line-height:14px;font-size:10px;color:#ffffff;width:104px;text-align:center;">名称</span>
<span class="t" style="left:1160px;top:193.3px;height:14px;line-height:14px;font-size:10px;color:#545454;width:34px;text-align:center;">锁定</span>
<span class="t" style="left:1194px;top:193.3px;height:14px;line-height:14px;font-size:10px;color:#545454;width:34px;text-align:center;">图号</span>
<div style="left:1055px;top:226px;width:173px;height:1px;background:#efefef;"></div>
<span class="t" style="left:1081px;top:210.8px;height:14px;line-height:14px;font-size:10px;color:#545454;">标高14.530m...</span>
<svg style="left:1170px;top:209px;" width="14" height="15" viewBox="0 0 14 15"><rect x="1.5" y="6.5" width="10" height="7" rx="1" fill="#eef4fd" stroke="#5a74cc"/><path d="M7 6.5 V4 Q7 1.5 9.5 1.5 Q12 1.5 12 4" fill="none" stroke="#5a74cc"/><path d="M6.5 9 V11" stroke="#5a74cc"/></svg>
<div style="left:1055px;top:243px;width:173px;height:1px;background:#efefef;"></div>
<span class="t" style="left:1081px;top:228.3px;height:14px;line-height:14px;font-size:10px;color:#545454;">柱脚平面布置图</span>
<svg style="left:1170px;top:226px;" width="14" height="15" viewBox="0 0 14 15"><rect x="1.5" y="6.5" width="10" height="7" rx="1" fill="#eef4fd" stroke="#5a74cc"/><path d="M4 6.5 V4 Q4 1.5 6.5 1.5 Q9 1.5 9 4 V6.5" fill="none" stroke="#5a74cc"/><path d="M6.5 9 V11" stroke="#5a74cc"/></svg>
<div style="left:1055px;top:260px;width:173px;height:1px;background:#efefef;"></div>
<span class="t" style="left:1081px;top:245.8px;height:14px;line-height:14px;font-size:10px;color:#545454;">标高3.680m梁...</span>
<svg style="left:1170px;top:244px;" width="14" height="15" viewBox="0 0 14 15"><rect x="1.5" y="6.5" width="10" height="7" rx="1" fill="#eef4fd" stroke="#5a74cc"/><path d="M7 6.5 V4 Q7 1.5 9.5 1.5 Q12 1.5 12 4" fill="none" stroke="#5a74cc"/><path d="M6.5 9 V11" stroke="#5a74cc"/></svg>
<div style="left:1055px;top:278px;width:173px;height:1px;background:#efefef;"></div>
<span class="t" style="left:1081px;top:263.3px;height:14px;line-height:14px;font-size:10px;color:#545454;">标高3.800m板...</span>
<svg style="left:1170px;top:262px;" width="14" height="15" viewBox="0 0 14 15"><rect x="1.5" y="6.5" width="10" height="7" rx="1" fill="#eef4fd" stroke="#5a74cc"/><path d="M7 6.5 V4 Q7 1.5 9.5 1.5 Q12 1.5 12 4" fill="none" stroke="#5a74cc"/><path d="M6.5 9 V11" stroke="#5a74cc"/></svg>
<div style="left:1055px;top:296px;width:173px;height:1px;background:#efefef;"></div>
<span class="t" style="left:1081px;top:280.8px;height:14px;line-height:14px;font-size:10px;color:#545454;">LT2 二、三层...</span>
<svg style="left:1170px;top:279px;" width="14" height="15" viewBox="0 0 14 15"><rect x="1.5" y="6.5" width="10" height="7" rx="1" fill="#eef4fd" stroke="#5a74cc"/><path d="M4 6.5 V4 Q4 1.5 6.5 1.5 Q9 1.5 9 4 V6.5" fill="none" stroke="#5a74cc"/><path d="M6.5 9 V11" stroke="#5a74cc"/></svg>
<div style="left:1055px;top:296px;width:173px;height:18px;background:#d9e8fb;"></div>
<div style="left:1055px;top:313px;width:173px;height:1px;background:#efefef;"></div>
<span class="t" style="left:1081px;top:298.3px;height:14px;line-height:14px;font-size:10px;color:#545454;">LT2 二、三层...</span>
<svg style="left:1170px;top:296px;" width="14" height="15" viewBox="0 0 14 15"><rect x="1.5" y="6.5" width="10" height="7" rx="1" fill="#eef4fd" stroke="#5a74cc"/><path d="M4 6.5 V4 Q4 1.5 6.5 1.5 Q9 1.5 9 4 V6.5" fill="none" stroke="#5a74cc"/><path d="M6.5 9 V11" stroke="#5a74cc"/></svg>
<div style="left:1055px;top:330px;width:173px;height:1px;background:#efefef;"></div>
<span class="t" style="left:1081px;top:315.8px;height:14px;line-height:14px;font-size:10px;color:#545454;">2-2剖面图</span>
<svg style="left:1170px;top:314px;" width="14" height="15" viewBox="0 0 14 15"><rect x="1.5" y="6.5" width="10" height="7" rx="1" fill="#eef4fd" stroke="#5a74cc"/><path d="M4 6.5 V4 Q4 1.5 6.5 1.5 Q9 1.5 9 4 V6.5" fill="none" stroke="#5a74cc"/><path d="M6.5 9 V11" stroke="#5a74cc"/></svg>
<div style="left:1159px;top:191px;width:1px;height:140px;background:#eeeeee;"></div>
<div style="left:1193px;top:191px;width:1px;height:140px;background:#eeeeee;"></div>
<div style="left:1227px;top:191px;width:1px;height:140px;background:#eeeeee;"></div>
<div style="left:1272px;top:240px;width:6px;height:86px;background:#c9c9c9;border-radius:3px;"></div>
<div style="left:1055px;top:331px;width:225px;height:9px;background:#ffffff;"></div>
<div style="left:1055px;top:341px;width:225px;height:10px;background:linear-gradient(#eeeeee,#e3e3e3);"></div>
<svg style="left:1272px;top:343px;" width="6" height="6" viewBox="0 0 6 6"><path d="M0.5 0.5 L5 5 M5 0.5 L0.5 5" stroke="#aaa" stroke-width="0.9"/></svg>
<div style="left:1055px;top:351px;width:225px;height:18px;background:#f3f3f3;"></div>
<span class="t" style="left:1062px;top:354.3px;height:14px;line-height:14px;font-size:10px;color:#777;">图层管理</span>
<span class="t" style="left:1059px;top:374.8px;height:14px;line-height:14px;font-size:10px;color:#525252;">显示指定图层</span>
<span class="t" style="left:1126px;top:374.8px;height:14px;line-height:14px;font-size:10px;color:#525252;">隐藏指定图层</span>
<div style="left:1055px;top:392px;width:225px;height:18px;background:#fcfcfc;border-top:1px solid #e6e6e6;border-bottom:1px solid #e0e0e0;"></div>
<span class="t" style="left:1056px;top:394.8px;height:14px;line-height:14px;font-size:10px;color:#545454;width:40px;text-align:center;">开 / 关</span>
<span class="t" style="left:1096px;top:394.8px;height:14px;line-height:14px;font-size:10px;color:#545454;width:32px;text-align:center;">颜色</span>
<span class="t" style="left:1128px;top:394.8px;height:14px;line-height:14px;font-size:10px;color:#545454;width:152px;text-align:center;">名称</span>
<div style="left:1055px;top:428px;width:225px;height:1px;background:#eeeeee;"></div>
<div style="left:1069px;top:413px;width:12px;height:12px;background:#2f7de1;border-radius:2px;"></div>
<svg style="left:1069px;top:413px;" width="12" height="12" viewBox="0 0 12 12"><path d="M2.5 6 L5 8.5 L9.5 3.5" fill="none" stroke="#fff" stroke-width="1.5"/></svg>
<svg style="left:1113px;top:416px;" width="4" height="6" viewBox="0 0 4 6"><path d="M0 0 L3 2.5 L0 5 Z" fill="#777"/></svg>
<span class="t" style="left:1130px;top:412.8px;height:14px;line-height:14px;font-size:10px;color:#525252;">已提取的 CAD 图层</span>
<div style="left:1055px;top:445px;width:225px;height:1px;background:#eeeeee;"></div>
<div style="left:1069px;top:430px;width:12px;height:12px;background:#2f7de1;border-radius:2px;"></div>
<svg style="left:1069px;top:430px;" width="12" height="12" viewBox="0 0 12 12"><path d="M2.5 6 L5 8.5 L9.5 3.5" fill="none" stroke="#fff" stroke-width="1.5"/></svg>
<svg style="left:1113px;top:434px;" width="4" height="6" viewBox="0 0 4 6"><path d="M0 0 L3 2.5 L0 5 Z" fill="#777"/></svg>
<span class="t" style="left:1130px;top:430.3px;height:14px;line-height:14px;font-size:10px;color:#525252;">CAD 原始图层</span>
<div style="left:1096px;top:393px;width:1px;height:52px;background:#e6e6e6;"></div>
<div style="left:1127px;top:393px;width:1px;height:52px;background:#e6e6e6;"></div>
<div style="left:0px;top:660px;width:1280px;height:28px;background:#fdfdfd;border-top:1px solid #ececec;"></div>
<span class="t" style="left:2px;top:667.8px;height:14px;line-height:14px;font-size:10px;color:#555;">层高：3.800</span>
<span class="t" style="left:77px;top:667.8px;height:14px;line-height:14px;font-size:10px;color:#555;">底标高：0.000</span>
<span class="t" style="left:168px;top:667.8px;height:14px;line-height:14px;font-size:10px;color:#555;">选中图元：0</span>
<span class="t" style="left:260px;top:667.8px;height:14px;line-height:14px;font-size:10px;color:#555;">隐藏图元：0</span>
<div style="left:352.5px;top:663.5px;width:20px;height:20px;background:#ffffff;border:1px solid #c9c9c9;border-radius:2px;"></div>
<svg style="left:355.5px;top:667px;" width="14" height="14" viewBox="0 0 14 14"><path d="M3 2 V11 H12 M3 8 H6" fill="none" stroke="#5f6b7a" stroke-width="1.1"/></svg>
<div style="left:376px;top:663.5px;width:30px;height:20px;background:#d6e6fb;border:1px solid #7fb0ee;border-radius:2px;"></div>
<svg style="left:379px;top:667px;" width="14" height="14" viewBox="0 0 14 14"><rect x="2.5" y="2.5" width="9" height="9" rx="2" fill="none" stroke="#3b6fc0" stroke-width="1.2"/></svg>
<svg style="left:398px;top:673px;" width="5" height="3" viewBox="0 0 5 3"><path d="M0 0 H4 L2 2.4 Z" fill="#555"/></svg>
<div style="left:408px;top:663.5px;width:30px;height:20px;background:#d6e6fb;border:1px solid #7fb0ee;border-radius:2px;"></div>
<svg style="left:411px;top:667px;" width="14" height="14" viewBox="0 0 14 14"><path d="M7 1.5 L12 4 V10 L7 12.5 L2 10 V4 Z M2 4 L7 6.5 L12 4 M7 6.5 V12.5" fill="none" stroke="#3b6fc0"/></svg>
<svg style="left:430px;top:673px;" width="5" height="3" viewBox="0 0 5 3"><path d="M0 0 H4 L2 2.4 Z" fill="#555"/></svg>
<div style="left:441px;top:663.5px;width:20px;height:20px;background:#ffffff;border:1px solid #c9c9c9;border-radius:2px;"></div>
<svg style="left:444px;top:667px;" width="14" height="14" viewBox="0 0 14 14"><path d="M2 2 L12 12 M12 2 L2 12" stroke="#b5b5b5"/></svg>
<div style="left:464px;top:663.5px;width:30px;height:20px;background:#ffffff;border:1px solid #c9c9c9;border-radius:2px;"></div>
<svg style="left:467px;top:667px;" width="14" height="14" viewBox="0 0 14 14"><circle cx="7" cy="7" r="4.8" fill="none" stroke="#5f6b7a"/><path d="M7 7 H11.5" stroke="#5f6b7a"/></svg>
<svg style="left:486px;top:673px;" width="5" height="3" viewBox="0 0 5 3"><path d="M0 0 H4 L2 2.4 Z" fill="#555"/></svg>
<div style="left:497px;top:663.5px;width:30px;height:20px;background:#d6e6fb;border:1px solid #7fb0ee;border-radius:2px;"></div>
<svg style="left:500px;top:667px;" width="14" height="14" viewBox="0 0 14 14"><path d="M2 11.5 H12 M2 11.5 L11 3" fill="none" stroke="#3b6fc0" stroke-width="1.1"/></svg>
<svg style="left:519px;top:673px;" width="5" height="3" viewBox="0 0 5 3"><path d="M0 0 H4 L2 2.4 Z" fill="#555"/></svg>
<div style="left:529px;top:663.5px;width:30px;height:20px;background:#d6e6fb;border:1px solid #7fb0ee;border-radius:2px;"></div>
<svg style="left:532px;top:667px;" width="14" height="14" viewBox="0 0 14 14"><path d="M2 5 H7" stroke="#3b6fc0"/><rect x="5" y="7" width="7" height="3.5" rx="1" fill="#3b7fd9"/></svg>
<svg style="left:551px;top:673px;" width="5" height="3" viewBox="0 0 5 3"><path d="M0 0 H4 L2 2.4 Z" fill="#555"/></svg>
<div style="left:562px;top:663.5px;width:21px;height:20px;background:#d6e6fb;border:1px solid #7fb0ee;border-radius:2px;"></div>
<svg style="left:565px;top:667px;" width="14" height="14" viewBox="0 0 14 14"><rect x="1.5" y="1.5" width="11" height="11" fill="none" stroke="#3b4a60" stroke-width="1.1"/><rect x="4" y="4" width="6" height="6" fill="none" stroke="#3b4a60"/></svg>
<div style="left:585px;top:663.5px;width:20px;height:20px;background:#ffffff;border:1px solid #c9c9c9;border-radius:2px;"></div>
<svg style="left:588px;top:667px;" width="14" height="14" viewBox="0 0 14 14"><rect x="2.5" y="1.5" width="4" height="11" fill="none" stroke="#5f6b7a"/><rect x="8.5" y="6.5" width="4" height="4" rx="1" fill="none" stroke="#5f6b7a"/></svg>
<div style="left:609px;top:663.5px;width:20px;height:20px;background:#ffffff;border:1px solid #c9c9c9;border-radius:2px;"></div>
<svg style="left:612px;top:667px;" width="14" height="14" viewBox="0 0 14 14"><path d="M2 12 V8 Q2 3 8 3 H12 M9 6 L12 3" fill="none" stroke="#5f6b7a"/></svg>
<div style="left:632.5px;top:664px;width:82.5px;height:20px;background:#ffffff;border:1px solid #c9c9c9;border-radius:2px;"></div>
<span class="t" style="left:638px;top:667.8px;height:14px;line-height:14px;font-size:10px;color:#545454;">-0.1米标高工作</span>
<svg style="left:707px;top:673px;" width="5" height="3" viewBox="0 0 5 3"><path d="M0 0 H4 L2 2.4 Z" fill="#555"/></svg>
<div style="left:0px;top:687.2px;width:1280px;height:30.8px;background:linear-gradient(#171c35 0px,#262c48 2px,#1f2641 6px,#1f2641 100%);"></div>
<div style="left:0px;top:687.2px;width:40px;height:30.8px;background:#1c2240;"></div>
<svg style="left:13px;top:697px;" width="14.5" height="14" viewBox="0 0 16 16"><path d="M0.5 2.8 L6.8 1.9 V7.5 H0.5 Z M7.8 1.7 L15.5 0.6 V7.5 H7.8 Z M0.5 8.5 H6.8 V14.1 L0.5 13.2 Z M7.8 8.5 H15.5 V15.4 L7.8 14.3 Z" fill="#ffffff"/></svg>
<div style="left:40px;top:687.2px;width:287px;height:30.8px;background:#f1f1f1;"></div>
<div style="left:40px;top:687.2px;width:5px;height:30.8px;background:#f9f9f9;"></div>
<svg style="left:50px;top:696px;" width="16" height="16" viewBox="0 0 16 16"><circle cx="9.5" cy="6" r="4.6" fill="none" stroke="#222" stroke-width="1.3"/><path d="M6.2 9.3 L1 14.5" stroke="#222" stroke-width="1.4"/></svg>
<span class="t" style="left:73px;top:695.3px;height:18px;line-height:18px;font-size:12.8px;color:#525252;">在此键入进行搜索</span>
<svg style="left:339px;top:696px;" width="17" height="16" viewBox="0 0 17 16"><path d="M3.5 2.5 V13.5 M10.5 2.5 V13.5 M1.5 4.5 H12.5 M1.5 11.5 H12.5" fill="none" stroke="#d8dae6" stroke-width="1.3"/><path d="M15 5.5 V13" stroke="#d8dae6" stroke-width="1.4"/><circle cx="15" cy="3" r="0.9" fill="#d8dae6"/></svg>
<div style="left:379.5px;top:693.7px;width:21px;height:21px;background:linear-gradient(#74c32c,#4a9a1c);border-radius:4px;"><svg style="left:0;top:0" width="21" height="21" viewBox="0 0 21 21"><path d="M16.5 5.5 H8.5 Q5.5 5.5 5.5 8.5 V12.5 Q5.5 15.5 8.5 15.5 H16.5" fill="none" stroke="#f4fff0" stroke-width="3"/></svg></div>
<svg style="left:421px;top:693px;" width="22" height="22" viewBox="0 0 22 22"><circle cx="11" cy="10" r="6.5" fill="none" stroke="#ff7a1a" stroke-width="3.2"/><path d="M6 15 L2.5 19.5" stroke="#ff9b3a" stroke-width="3.2" stroke-linecap="round"/></svg>
<svg style="left:461px;top:694px;" width="22" height="20" viewBox="0 0 22 20"><path d="M1 3 L5 16 L9 8 L12 16 L15 8 L17 16 L21 3 H17 L16 9 L14 3 H10 L8 9 L6 3 Z" fill="#e8352e"/></svg>
<svg style="left:503px;top:693px;" width="18" height="22" viewBox="0 0 18 22"><path d="M3 2 H14 L16 4 V20 H3 Z" fill="#c3d3ee"/><path d="M3 2 H6 V20 H3 Z" fill="#9fb6dd"/><rect x="6" y="4" width="9" height="4" fill="#6aa0e6"/></svg>
<svg style="left:546px;top:695px;" width="16" height="18" viewBox="0 0 16 18"><path d="M2 1 H11 L14 4 V17 H2 Z" fill="#1b2152"/></svg>
<svg style="left:586px;top:693px;" width="22" height="22" viewBox="0 0 22 22"><rect x="1" y="2" width="20" height="18" rx="2" fill="#2f8fe0"/><rect x="3" y="7" width="16" height="11" fill="#eaf4ff"/><path d="M5 10 H12 M5 13 H15" stroke="#2f8fe0" stroke-width="1.4"/></svg>
<svg style="left:627px;top:694px;" width="22" height="20" viewBox="0 0 22 20"><path d="M1 3 H9 L11 5 H21 V18 H1 Z" fill="#e9a825"/><path d="M1 8 H21 V18 H1 Z" fill="#ffd45e"/><rect x="6" y="10" width="10" height="5" fill="#4aa3e8"/></svg>
<div style="left:669.5px;top:693.7px;width:21px;height:21px;background:#2c62ad;border-radius:4px;border:1px solid #9fb8dc;border-radius:3px;"><span class="t" style="left:0;top:0;width:19px;line-height:19px;text-align:center;color:#e6efff;font-size:7.5px;font-weight:bold;">CAD</span></div>
<div style="left:710.0px;top:693.2px;width:22px;height:22px;background:linear-gradient(#e4f8f6,#b5e8e4);border-radius:4px;"><span class="t" style="left:0;top:0;width:22px;line-height:22px;text-align:center;color:#128f86;font-size:19px;font-weight:bold;font-family:'Liberation Serif',serif;">I</span></div>
<div style="left:742px;top:687.2px;width:42px;height:30.8px;background:#383c54;"></div>
<div style="left:751.5px;top:693.7px;width:21px;height:21px;background:linear-gradient(#ff6f52,#ee402c);border-radius:4px;"><svg style="left:0;top:0" width="21" height="21" viewBox="0 0 21 21"><path d="M16.5 5.5 H8.5 Q5.5 5.5 5.5 8.5 V12.5 Q5.5 15.5 8.5 15.5 H16.5" fill="none" stroke="#fff4f0" stroke-width="3"/></svg></div>
<svg style="left:1173px;top:700px;" width="12" height="8" viewBox="0 0 12 8"><path d="M1 6.5 L6 1.5 L11 6.5" fill="none" stroke="#e8e8e8" stroke-width="1.3"/></svg>
<span class="t" style="left:1193.5px;top:696.8px;height:16px;line-height:16px;font-size:12px;color:#f0f0f0;">中</span>
<svg style="left:1214px;top:695px;" width="18" height="18" viewBox="0 0 18 18"><circle cx="9" cy="9" r="8" fill="#e8402a"/><path d="M12 5.5 Q6 4.5 6 7.5 Q6 9 9 9.5 Q12 10 12 11.5 Q12 13.5 6 12.5" fill="none" stroke="#fff" stroke-width="1.8"/></svg>
<svg style="left:1248px;top:696px;" width="16" height="16" viewBox="0 0 16 16"><path d="M1.5 1.5 H14.5 V11.5 H10 L8 14 L6 11.5 H1.5 Z" fill="none" stroke="#e8e8e8" stroke-width="1.2"/></svg>
</div></body></html>
